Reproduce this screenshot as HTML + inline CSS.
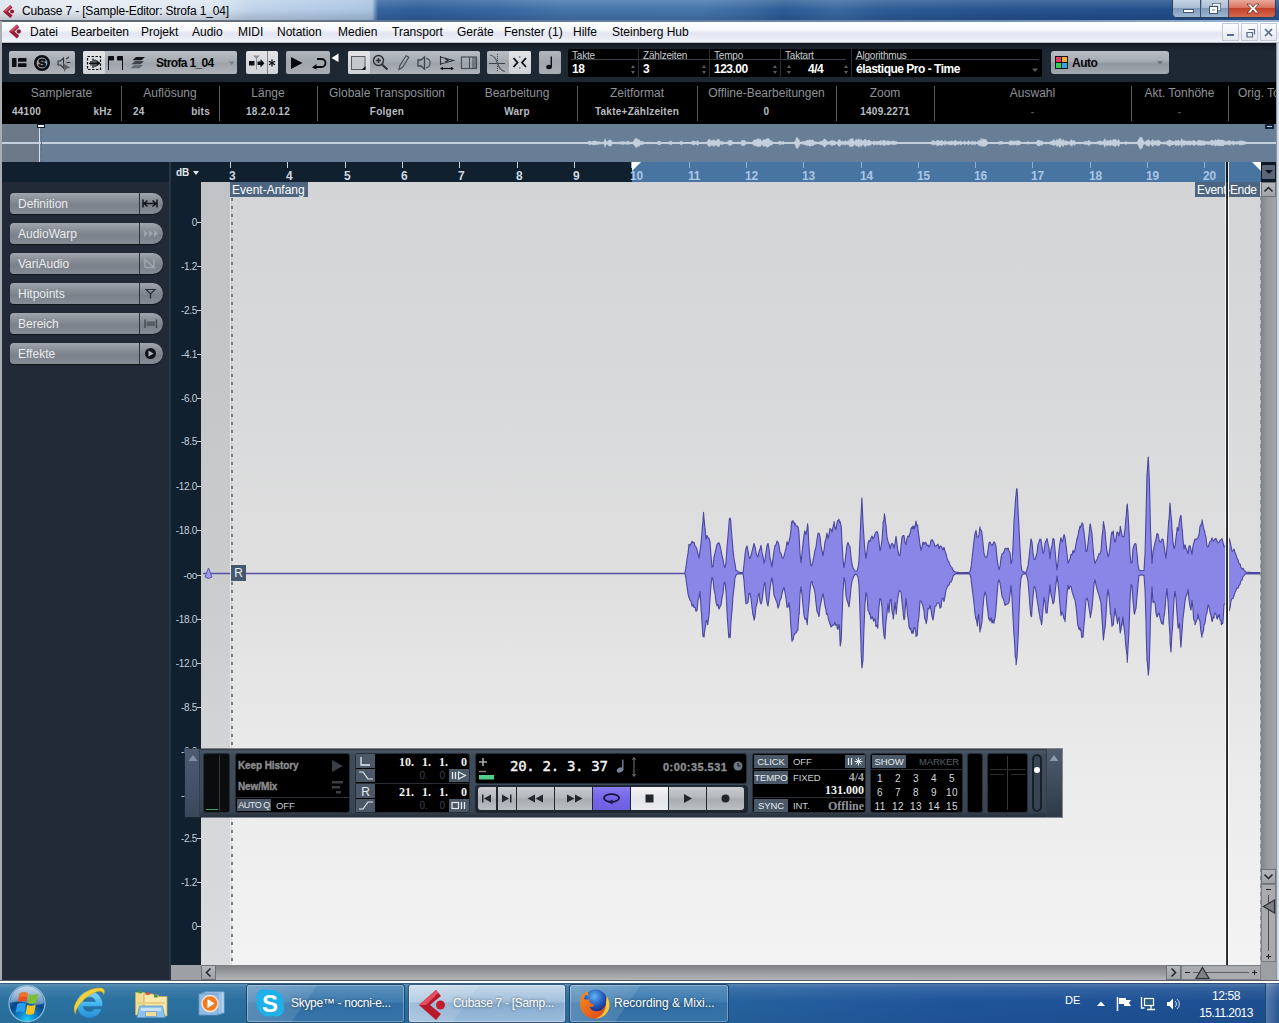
<!DOCTYPE html>
<html lang="de">
<head>
<meta charset="utf-8">
<title>Cubase 7 - [Sample-Editor: Strofa 1_04]</title>
<style>
*{box-sizing:border-box;margin:0;padding:0}
html,body{width:1279px;height:1023px;overflow:hidden;background:#212a36;font-family:"Liberation Sans",sans-serif}
#root{position:relative;width:1279px;height:1023px;overflow:hidden}
#root div,#root svg,#root span.a{position:absolute}
.t{white-space:nowrap;line-height:1}
#bl{left:0;top:21px;width:2px;height:961px;background:#a9adb2}
#br{left:1276px;top:43px;width:3px;height:939px;background:linear-gradient(90deg,#6f7780,#c9d3de 50%,#dfe6ee)}
#bb{left:0;top:980px;width:1279px;height:3px;background:linear-gradient(180deg,#5c5e62 0,#5c5e62 30%,#fbfbfc 36%,#ffffff 100%)}
/* ---------- title ---------- */
#title{left:0;top:0;width:1279px;height:22px;background:linear-gradient(90deg,#dfe6ee 0,#e6ecf3 100px,#dbe5f0 215px,#bfd3ea 250px,#afc8e4 340px,#a9c3e0 372px,#3566a0 378px,#2f5f9a 420px,#3869a3 500px,#4475ab 560px,#4676ac 700px,#3b6aa3 750px,#2d5c96 785px,#3b6aa3 835px,#2e5c96 885px,#26538f 1000px,#23508c 1170px,#2a5892 1279px)}
#title .shade{left:0;top:0;width:1279px;height:21px;background:linear-gradient(180deg,rgba(255,255,255,.16) 0,rgba(255,255,255,0) 45%,rgba(0,0,20,.16) 100%)}
#title .line{left:0;top:20px;width:1279px;height:2px;background:linear-gradient(90deg,#59636f 0,#69737f 300px,#5a7596 420px,#6f8fb5 1000px,#9fb6d2 1279px)}
#title .ttl{left:22px;top:5px;font-size:12px;color:#000;letter-spacing:-0.17px}
#winbtns{left:1172px;top:0;width:104px;height:18px;border:1px solid #2b3f5a;border-top:none;border-radius:0 0 5px 5px;overflow:hidden;background:#8aa6c6}
#winbtns .b1{left:0;top:0;width:28px;height:17px;background:linear-gradient(180deg,#c5d3e3 0,#a9bdd4 45%,#7f9bbb 50%,#9db6d2 100%);border-right:1px solid #3b506b}
#winbtns .b2{left:29px;top:0;width:27px;height:17px;background:linear-gradient(180deg,#c5d3e3 0,#a9bdd4 45%,#7f9bbb 50%,#9db6d2 100%);border-right:1px solid #3b506b}
#winbtns .b3{left:56px;top:0;width:47px;height:17px;background:linear-gradient(180deg,#e9a99c 0,#d9735f 45%,#c6412b 50%,#d4694f 100%)}
/* ---------- menubar ---------- */
#menubar{left:1px;top:22px;width:1278px;height:21px;background:linear-gradient(180deg,#ffffff 0,#f6f7fb 40%,#e3e6f2 55%,#e9ecf5 80%,#f4f5fa 100%);border-bottom:1px solid #b9bdc6}
#menubar .t{top:4px;font-size:12px;color:#000}
.mdi{top:1px;width:17px;height:18px;border:1px solid #c3c9d6;background:linear-gradient(180deg,#fdfdfe,#e6e9f3)}
/* ---------- toolbar ---------- */
#toolbar{left:2px;top:43px;width:1274px;height:39px;background:linear-gradient(180deg,#10161d 0,#1a232d 10%,#1e2833 25%,#1e2833 100%)}
.tg{top:8px;height:23px;border-radius:2px;background:linear-gradient(180deg,#b9bec4 0,#a5abb2 45%,#9da3ab 55%,#b0b5bb 100%)}
.tg .on{top:0;height:23px;background:linear-gradient(180deg,#e3e5e8 0,#d6d9dd 50%,#d0d3d8 100%);border-radius:2px}
.tg .sep{top:0;width:1px;height:23px;background:#7d838b}
.tfield{top:6px;height:28px;background:#000;border-radius:2px}
.tfield .lab{top:2px;font-size:10px;color:#c9cdd2;letter-spacing:-0.2px}
.tfield .val{top:14px;font-size:12px;font-weight:bold;color:#fff;letter-spacing:-0.5px}
.tfield .hl{top:10px;height:1px;background:#3a4047}
.tfield .vl{top:0;width:1px;height:28px;background:#2a3038}
.spin{width:5px;height:11px}
/* ---------- info ---------- */
#info{left:2px;top:82px;width:1274px;height:42px;background:#000}
#info .lab{top:5px;font-size:12px;color:#8d9298;text-align:center}
#info .val{top:25px;font-size:10px;font-weight:bold;color:#b9bdc1;text-align:center;letter-spacing:0.25px}
#info .dv{top:4px;width:1px;height:35px;background:#5d5a57}
/* ---------- overview ---------- */
#overview{left:2px;top:124px;width:1274px;height:38px;background:#687d96;overflow:hidden}
#overview .ovpre{left:0;top:0;width:37px;height:38px;background:#6c7989}
#overview .ovline{left:0;top:18px;width:1274px;height:2px;background:#c3cfdc}
#overview .ovsvg{left:0;top:0}
#overview .ovhandle{left:35px;top:0;width:8px;height:4px;background:#f0f3f6;border:1px solid #0b1a2a}
#overview .ovcursor{left:37px;top:4px;width:1px;height:34px;background:#d8dfe7}
#overview .ovcursor2{left:39px;top:6px;width:1px;height:32px;background:repeating-linear-gradient(180deg,#5d6f85 0,#5d6f85 3px,transparent 3px,transparent 6px)}
#overview .ovcorner{left:1263px;top:0;width:9px;height:5px;background:#13233a;border:1px solid #13233a}
#overview .ovcorner:after{content:"";position:absolute;left:1px;top:1px;width:5px;height:1px;background:#c3cfdc}
/* ---------- left panel ---------- */
#leftpanel{left:2px;top:162px;width:169px;height:818px;background:#212a36}
#leftpanel .hd{left:0;top:0;width:167px;height:20px;background:#10202f}
#leftpanel .edge{left:167px;top:0;width:2px;height:818px;background:#2a3644}
.lb{left:8px;width:153px;height:21px;border-radius:4px 11px 11px 4px;background:linear-gradient(180deg,#a1a6ad 0,#8b9199 30%,#7b818a 60%,#868c95 100%);box-shadow:0 1px 1px rgba(0,0,0,.5)}
.lb .t{left:8px;top:5px;font-size:12px;color:#e9ebed}
.lb .dv{left:129px;top:0;width:1px;height:21px;background:#2c333c}
.lb svg{left:130px;top:0}
/* ---------- ruler ---------- */
#ruler{left:171px;top:162px;width:1090px;height:20px;background:#10202f;overflow:hidden}
#ruler .rsel{left:461px;top:0;width:629px;height:20px;background:#4874a2}
#ruler .rt{top:0;width:1px;height:6px;background:#c9d3de}
#ruler .rt.s{background:#8fb0d2}
#ruler .rn{top:7px;font-size:13px;font-weight:bold;color:#cdd7e2;letter-spacing:-0.3px;transform:scaleX(.92);transform-origin:0 0}
#ruler .rn.s{color:#a9c6e6}
#ruler .rtriL{left:461px;top:0;width:0;height:0;border-top:9px solid #fff;border-right:9px solid transparent}
#ruler .rtriR{left:1081px;top:0;width:0;height:0;border-top:9px solid #fff;border-left:9px solid transparent}
#ruler .rcur{left:1055px;top:0;width:2px;height:20px;background:#101820}
#ruler .rcur2{left:1057px;top:0;width:1px;height:20px;background:#e8eef4}
#ruler .rcur0{left:1054px;top:0;width:1px;height:20px;background:rgba(232,238,244,.7)}
#rdrop{left:1261px;top:162px;width:15px;height:20px;background:#0c1826}
#rdrop .rdropin{left:1px;top:3px;width:13px;height:14px;background:#5a6675;border-radius:1px}
#rdrop .rdroparrow{left:4px;top:8px;width:0;height:0;border-top:4px solid #0a1320;border-left:4px solid transparent;border-right:4px solid transparent}
/* ---------- db scale ---------- */
#dbscale{left:171px;top:162px;width:30px;height:818px;background:#10202f}
#dbscale .dbhead{left:5px;top:6px;font-size:10px;font-weight:bold;color:#e4e8ec}
#dbscale .dbarrow{left:22px;top:9px;width:0;height:0;border-top:4px solid #e4e8ec;border-left:3px solid transparent;border-right:3px solid transparent}
#dbscale .dbl{right:4px;font-size:10px;color:#c3ced9;letter-spacing:-0.3px;margin-top:21px}
#dbscale .dbt{left:26px;width:4px;height:1px;background:#c3ced9;margin-top:20px}
/* ---------- wave ---------- */
#wave{left:201px;top:182px;width:1060px;height:783px;background:linear-gradient(180deg,#d3d4d6 0,#d8d9da 25%,#dfdfe0 50%,#ebebeb 75%,#f3f3f3 100%);overflow:hidden}
#wave .pre{left:0;top:0;width:31px;height:783px;background:rgba(100,104,112,.17)}
#wave .wsvg{left:0;top:0}
#wave .evline{left:28.5px;top:14px;width:1.5px;height:769px;background:rgba(240,244,248,.75)}
#wave .evline2{left:30px;top:14px;width:2.4px;height:769px;background:repeating-linear-gradient(180deg,transparent 0,transparent 2px,#777c84 2px,#777c84 5.5px,transparent 5.5px,transparent 8px)}
#wave .evlabel{top:0;height:15px;background:#4d6580;color:#fff;font-size:12px;padding:2px 0 0 2px}
#wave .rbox{left:30px;top:383px;width:15px;height:16px;background:#46596c;color:#e8ecf0;font-size:12px;text-align:center;padding-top:2px}
#wave .cur{left:1025px;top:0;width:2px;height:783px;background:linear-gradient(90deg,#3a3d42,#1d2024)}
#wave .cur2{left:1027px;top:0;width:1px;height:783px;background:#fff}
#wave .cur0{left:1024px;top:0;width:1px;height:783px;background:rgba(255,255,255,.75)}
#wave .endline{left:1059px;top:14px;width:1px;height:769px;background:repeating-linear-gradient(180deg,#8d9096 0,#8d9096 4px,#c0c3c8 4px,#c0c3c8 8px)}
/* ---------- scrollbars ---------- */
#vscroll{left:1261px;top:182px;width:15px;height:783px;background:linear-gradient(90deg,#7f8388 0,#96999e 40%,#a1a4a8 100%)}
#hscroll{left:201px;top:965px;width:1060px;height:15px;background:linear-gradient(180deg,#7e8084 0,#96989b 45%,#b2b4b7 100%)}
.sbtn{background:linear-gradient(180deg,#b3b6ba,#9fa2a6);border:1px solid #6e7278}
#corner{left:1261px;top:962px;width:15px;height:18px;background:#9c9fa3}
#dbbot{left:171px;top:965px;width:30px;height:15px;background:#9da0a5}
/* ---------- transport ---------- */
#transport{left:185px;top:749px;width:877px;height:68px;background:linear-gradient(180deg,#2c3744 0,#4a5766 3%,#3f4b59 9%,#3f4b59 50%,#394452 92%,#262f3a 100%);box-shadow:0 0 0 1px rgba(30,38,48,.5)}
#transport .hL{left:0;top:0;width:15px;height:68px;background:linear-gradient(180deg,#4c5b6f 0,#44536a 50%,#394759 100%);border-right:1px solid #323e4c}
#transport .hR{left:861px;top:0;width:16px;height:68px;background:linear-gradient(180deg,#4e5c6e 0,#3f4c5c 50%,#2d3946 100%);border-left:1px solid #323e4c}
.bx{background:#000;border-radius:2px;top:5px;height:58px;box-shadow:0 0 0 1px #252e39}
.tb{background:#4a5868;color:#e6eaee;font-size:9.5px;text-align:center;letter-spacing:-0.1px}
.tl{font-size:9.5px;color:#c9ced4;letter-spacing:-0.1px}
.tn{font-family:"Liberation Serif",serif;font-weight:bold;font-size:12px;color:#f2f2f2}
.tbtn{top:2px;height:23px;background:linear-gradient(180deg,#c9ccd0 0,#b4b8bd 45%,#a9adb3 55%,#bcc0c4 100%)}
.mk{font-size:10px;color:#d5d9dd;width:16px;text-align:center;letter-spacing:0.4px;margin-top:1px}
/* ---------- taskbar ---------- */
#taskbar{left:0;top:983px;width:1279px;height:40px;background:linear-gradient(180deg,rgba(20,40,60,.55) 0,rgba(255,255,255,.22) 4%,rgba(255,255,255,.10) 12%,rgba(255,255,255,0) 45%,rgba(0,0,0,.04) 100%),linear-gradient(90deg,#2a719f 0,#2a6e9f 45%,#245f9d 60%,#1f549a 75%,#1d4f90 100%)}
.tkb{top:1px;height:39px;border:1px solid #1d4668;border-radius:3px;background:linear-gradient(125deg,rgba(255,255,255,.22) 0,rgba(255,255,255,.10) 38%,rgba(255,255,255,0) 39%),linear-gradient(180deg,#5a90bd 0,#3f7db0 45%,#326fa4 50%,#3573a8 100%);box-shadow:inset 0 0 0 1px rgba(255,255,255,.30)}
.tkb.act{background:linear-gradient(125deg,rgba(255,255,255,.25) 0,rgba(255,255,255,.10) 38%,rgba(255,255,255,0) 39%),linear-gradient(180deg,#c4d8ea 0,#a2c0dc 45%,#86acd0 50%,#9cbcdb 100%);border-color:#335a80}
.tkb .t{left:44px;top:12px;font-size:12px;color:#fff;text-shadow:0 0 3px rgba(0,0,0,.6);letter-spacing:-0.3px}
#tray .t{color:#fff;font-size:12px}

</style>
</head>
<body>
<div id="root">
<div id="title"><div class="shade"></div><div class="line"></div>
<svg style="left:2px;top:4px" width="14" height="15" viewBox="0 0 16 16"><path d="M9.5,0.5 L1,8 L9.5,15.5 L12,12.5 L7,8 L12,3.5Z" fill="#9a1c34"/><path d="M9.5,0.5 L1,8 L5,8 L11,2.3Z" fill="#d0506a"/><circle cx="11.5" cy="8" r="2.3" fill="#8e1830"/></svg>
<div class="t ttl">Cubase 7 - [Sample-Editor: Strofa 1_04]</div>
<div id="winbtns"><div class="b1"></div><div class="b2"></div><div class="b3"></div>
<svg style="left:0;top:0" width="104" height="18" viewBox="0 0 104 18"><rect x="10.500" y="9.500" width="10" height="3" fill="#fff" stroke="#45556a" stroke-width="1"/><rect x="39.500" y="3.500" width="8" height="7" fill="none" stroke="#45556a" stroke-width="1"/><rect x="40.500" y="4.500" width="6" height="5" fill="none" stroke="#fff" stroke-width="1.500"/><rect x="36.500" y="6.500" width="8" height="7" fill="#a9bdd4" stroke="#45556a" stroke-width="1"/><rect x="38" y="8" width="5" height="4" fill="none" stroke="#fff" stroke-width="1.800"/><path d="M74,4 L77.500,4 L80,7 L82.500,4 L86,4 L82,8.500 L86,13 L82.500,13 L80,10 L77.500,13 L74,13 L78,8.500Z" fill="#fff" stroke="#6b2a20" stroke-width="0.800"/></svg>
</div>
</div>

<div id="menubar">
<svg style="left:7px;top:2px" width="15" height="15" viewBox="0 0 16 16"><path d="M9.5,0.5 L1,8 L9.5,15.5 L12,12.5 L7,8 L12,3.5Z" fill="#9a1c34"/><path d="M9.5,0.5 L1,8 L5,8 L11,2.3Z" fill="#d0506a"/><circle cx="11.5" cy="8" r="2.3" fill="#8e1830"/></svg>
<div class="t" style="left:29px">Datei</div>
<div class="t" style="left:70px">Bearbeiten</div>
<div class="t" style="left:140px">Projekt</div>
<div class="t" style="left:191px">Audio</div>
<div class="t" style="left:237px">MIDI</div>
<div class="t" style="left:276px">Notation</div>
<div class="t" style="left:337px">Medien</div>
<div class="t" style="left:391px">Transport</div>
<div class="t" style="left:456px">Geräte</div>
<div class="t" style="left:503px">Fenster (1)</div>
<div class="t" style="left:572px">Hilfe</div>
<div class="t" style="left:611px">Steinberg Hub</div>
<div class="mdi" style="left:1221px"></div><div class="mdi" style="left:1240px"></div><div class="mdi" style="left:1259px"></div>
<svg style="left:1221px;top:1px" width="56" height="18" viewBox="0 0 56 18"><rect x="5" y="11" width="7" height="2" fill="#566a90"/><path d="M26.500,6.500 h6 v5 M25,9.500 h5.500 v4.500 h-5.500z" fill="none" stroke="#566a90" stroke-width="1.200"/><path d="M43,6 L50,13 M50,6 L43,13" stroke="#566a90" stroke-width="1.700"/></svg>
</div>

<div id="toolbar">
<div class="tg" style="left:7px;width:66px"></div>
<svg style="left:7px;top:8px" width="66" height="23" viewBox="9 51 66 23"><rect x="12" y="58" width="4.500" height="9" rx="0.500" fill="#0c0f13"/><rect x="18" y="58" width="8.500" height="3.800" rx="0.500" fill="#0c0f13"/><rect x="18" y="63.200" width="8.500" height="3.800" rx="0.500" fill="#0c0f13"/><circle cx="42" cy="63" r="6.700" fill="none" stroke="#0c0f13" stroke-width="2.600"/><text x="42" y="67.300" font-family="Liberation Sans,sans-serif" font-size="11.500" font-weight="bold" text-anchor="middle" fill="#0c0f13" stroke="#0c0f13" stroke-width="0.900">S</text><path d="M58,61 h2.500 l3,-3 v10 l-3,-3 h-2.500z" fill="none" stroke="#30353c" stroke-width="1.100"/><path d="M66,59 l3,-2 M66.500,62.500 h4" stroke="#30353c" stroke-width="1.100"/><path d="M63,63 l7.500,5 l-4,0.500 l-2,3.500z" fill="#5a6068"/></svg>
<div class="tg" style="left:81px;width:154px"><div class="on" style="left:0;width:22px"></div></div>
<svg style="left:81px;top:8px" width="154" height="23" viewBox="83 51 154 23"><rect x="87.500" y="56.500" width="13" height="13" fill="none" stroke="#0c0f13" stroke-width="1.200" stroke-dasharray="2.500 1.500"/><path d="M89,63.300 h8 M91,61 v4.600 M93,58.500 v9.500 M95,59.500 v7.600" fill="none" stroke="#0c0f13" stroke-width="1.300"/><path d="M96.300,59.800 L100.500,63.300 L96.300,66.800Z" fill="#0c0f13"/><path d="M108.500,70 v-13.500 h5 v3.500 h-5 M122.500,70 v-13.500 h-5 v3.500 h5" fill="#0c0f13" stroke="#0c0f13" stroke-width="1"/><path d="M132.500,60.300 l3.500,-3.300 h9 l-3.500,3.300z" fill="#14181d"/><path d="M131.500,64.300 l3.500,-3.300 h9 l-3.500,3.300z" fill="#3f454d"/><path d="M130.500,68.300 l3.500,-3.300 h9 l-3.500,3.300z" fill="#666c74"/><path d="M228.500,61.500 h6 l-3,3.500z" fill="#7b8189"/></svg>
<div class="t" style="left:154px;top:14px;font-size:12px;font-weight:bold;color:#050608;letter-spacing:-0.65px">Strofa 1_04</div>
<div class="tg" style="left:244px;width:32px;background:linear-gradient(180deg,#e3e5e8 0,#d6d9dd 50%,#d0d3d8 100%)"><div class="sep" style="left:21px"></div></div>
<svg style="left:244px;top:8px" width="32" height="23" viewBox="246 51 32 23"><path d="M253,55.500 h7 l-3,3 v11 h-1 v-11z" fill="#8a9098"/><rect x="249" y="61" width="5.500" height="4.500" fill="#0c0f13"/><path d="M257.500,61.500 h3 v-2.500 l4,4.200 l-4,4.300 v-2.500 h-3z" fill="#0c0f13"/><path d="M272,59.500 v7 M269,61.200 l6,3.600 M275,61.200 l-6,3.600" stroke="#0c0f13" stroke-width="1.300"/></svg>
<div class="tg" style="left:284px;width:44px;background:linear-gradient(180deg,#b2b7be 0,#a0a6ad 50%,#a9aeb5 100%)"></div>
<svg style="left:284px;top:8px" width="56" height="23" viewBox="286 51 56 23"><path d="M291,57 l11.500,6 l-11.500,6z" fill="#07090c"/><path d="M317,59 h4.500 a4,4 0 0 1 0,8 h-6" fill="none" stroke="#07090c" stroke-width="1.800"/><path d="M312,67.500 l4.500,-3.500 v5.500z" fill="#07090c"/><path d="M331.500,58 l7,-4.500 v8.500z" fill="#fff"/></svg>
<div class="tg" style="left:346px;width:132px"><div class="on" style="left:0;width:22px"></div></div>
<svg style="left:346px;top:8px" width="132" height="23" viewBox="348 51 132 23"><rect x="351.500" y="56.500" width="13.500" height="13" fill="#c5c8cc" stroke="#575c64" stroke-width="1"/><path d="M365.500,66 v4 h-4z" fill="#0c0f13"/><circle cx="378.500" cy="60.500" r="5" fill="none" stroke="#2a2f36" stroke-width="1.400"/><path d="M376,60.500 h5 M378.500,58 v5" stroke="#2a2f36" stroke-width="1.600"/><path d="M382,64.500 l5.500,5" stroke="#2a2f36" stroke-width="2"/><path d="M399,69.500 l0.800,-3.800 l6.200,-10 l2.800,1.600 l-6.200,10z" fill="none" stroke="#4a5058" stroke-width="1.200"/><path d="M418,60 h3 l3.500,-3 v12 l-3.500,-3 h-3z" fill="none" stroke="#3f454d" stroke-width="1.300"/><path d="M426,58.300 a4.800,4.800 0 0 1 0,9.500" fill="none" stroke="#4f555d" stroke-width="1.200"/><path d="M440.500,56 v9 M440.500,57 l13,3.500 l-13,3.500 M445,58.800 l3,1.700 l-3,1.700" fill="none" stroke="#2a2f36" stroke-width="1.100"/><path d="M441.500,68.500 h11" stroke="#0c0f13" stroke-width="1.200"/><path d="M440,68.500 l3,-1.800 v3.600z M454,68.500 l-3,-1.800 v3.600z" fill="#0c0f13"/><rect x="461.500" y="57" width="15" height="11.500" fill="none" stroke="#4a5058" stroke-width="1.200"/><path d="M469.500,57 v11.500 M473,57 v11.500 M475,57 v11.500" stroke="#4a5058" stroke-width="1.100"/></svg>
<div class="tg" style="left:485px;width:44px"><div class="on" style="left:22px;width:22px"></div></div>
<svg style="left:485px;top:8px" width="44" height="23" viewBox="487 51 44 23"><path d="M489,63.500 h16" stroke="#3f454d" stroke-width="1"/><path d="M497.500,54 v17" stroke="#3f454d" stroke-width="1" stroke-dasharray="1 1"/><path d="M490,55 c5,1 6,4 7.500,8.500 c1.500,4.500 3,7 7.500,8" fill="none" stroke="#565c64" stroke-width="1.200"/><path d="M513.500,58 l4,4.500 l-4,4.500 M526,58 l-4,4.500 l4,4.500" fill="none" stroke="#0c0f13" stroke-width="1.800"/><path d="M519.800,56 v2 M519.800,67 v2" stroke="#6b7179" stroke-width="1"/></svg>
<div class="tg" style="left:537px;width:22px;background:linear-gradient(180deg,#b2b7be 0,#a0a6ad 50%,#a9aeb5 100%)"></div>
<svg style="left:537px;top:8px" width="22" height="23" viewBox="539 51 22 23"><ellipse cx="549" cy="67" rx="2.800" ry="2.200" fill="#0c0f13"/><path d="M551.300,67 v-10.500" stroke="#0c0f13" stroke-width="1.400"/></svg>
<div class="tfield" style="left:566px;width:474px">
<div class="hl" style="left:3px;width:275px"></div><div class="hl" style="left:287px;width:184px"></div>
<div class="vl" style="left:70px"></div><div class="vl" style="left:141px"></div><div class="vl" style="left:212px"></div><div class="vl" style="left:283px"></div>
<div class="t lab" style="left:4px">Takte</div><div class="t val" style="left:4px">18</div>
<div class="t lab" style="left:75px">Zählzeiten</div><div class="t val" style="left:75px">3</div>
<div class="t lab" style="left:146px">Tempo</div><div class="t val" style="left:146px">123.00</div>
<div class="t lab" style="left:217px">Taktart</div><div class="t val" style="left:240px">4/4</div>
<div class="t lab" style="left:288px">Algorithmus</div><div class="t val" style="left:288px">élastique Pro - Time</div>
<svg style="left:0;top:0" width="474" height="28" viewBox="0 0 474 28"><g fill="#5a6068"><path d="M63,19 h4 l-2,-3z M63,22 h4 l-2,3z"/><path d="M134,19 h4 l-2,-3z M134,22 h4 l-2,3z"/><path d="M205,19 h4 l-2,-3z M205,22 h4 l-2,3z"/><path d="M219,19 h4 l-2,-3z M219,22 h4 l-2,3z"/><path d="M276,19 h4 l-2,-3z M276,22 h4 l-2,3z"/><path d="M464,19.500 h6 l-3,3.500z"/></g></svg>
</div>
<div class="tg" style="left:1049px;width:118px;border-radius:3px;background:linear-gradient(180deg,#b9bec4 0,#a5abb2 45%,#9097a0 55%,#a4aab1 100%)"></div>
<svg style="left:1053px;top:13px" width="13" height="13" viewBox="0 0 13 13"><rect x="0" y="0" width="13" height="13" fill="#10161a"/><rect x="1" y="1" width="5" height="5" fill="#e63a58"/><rect x="7" y="1" width="5" height="5" fill="#efae30"/><rect x="1" y="7" width="5" height="5" fill="#32cf60"/><rect x="7" y="7" width="5" height="5" fill="#38a6de"/></svg>
<div class="t" style="left:1070px;top:14px;font-size:12px;font-weight:bold;color:#050608;letter-spacing:-0.5px">Auto</div>
<svg style="left:1154px;top:17px" width="8" height="6" viewBox="0 0 8 6"><path d="M1,1 h6 l-3,3.500z" fill="#6f757d"/></svg>
</div>

<div id="info">
<div class="dv" style="left:119px"></div><div class="dv" style="left:217px"></div><div class="dv" style="left:315px"></div><div class="dv" style="left:455px"></div><div class="dv" style="left:575px"></div><div class="dv" style="left:695px"></div><div class="dv" style="left:834px"></div><div class="dv" style="left:932px"></div><div class="dv" style="left:1129px"></div><div class="dv" style="left:1226px"></div>
<div class="t lab" style="left:0;width:119px">Samplerate</div><div class="t val" style="left:10px;text-align:left">44100</div><div class="t val" style="left:60px;width:50px;text-align:right">kHz</div>
<div class="t lab" style="left:119px;width:98px">Auflösung</div><div class="t val" style="left:131px;text-align:left">24</div><div class="t val" style="left:158px;width:50px;text-align:right">bits</div>
<div class="t lab" style="left:217px;width:98px">Länge</div><div class="t val" style="left:217px;width:98px">18.2.0.12</div>
<div class="t lab" style="left:315px;width:140px">Globale Transposition</div><div class="t val" style="left:315px;width:140px">Folgen</div>
<div class="t lab" style="left:455px;width:120px">Bearbeitung</div><div class="t val" style="left:455px;width:120px">Warp</div>
<div class="t lab" style="left:575px;width:120px">Zeitformat</div><div class="t val" style="left:575px;width:120px">Takte+Zählzeiten</div>
<div class="t lab" style="left:695px;width:139px">Offline-Bearbeitungen</div><div class="t val" style="left:695px;width:139px">0</div>
<div class="t lab" style="left:834px;width:98px">Zoom</div><div class="t val" style="left:834px;width:98px">1409.2271</div>
<div class="t lab" style="left:932px;width:197px">Auswahl</div><div class="t val" style="left:932px;width:197px;color:#55595e">-</div>
<div class="t lab" style="left:1129px;width:97px">Akt. Tonhöhe</div><div class="t val" style="left:1129px;width:97px;color:#55595e">-</div>
<div class="t lab" style="left:1236px;width:60px;text-align:left">Orig. To</div>
</div>

<div id="overview"><div class="ovpre"></div><div class="ovline"></div><svg class="ovsvg" width="1275" height="38" viewBox="0 0 1275 38"><path d="M585,19.0 L586,17.8 L587,17.0 L588,17.0 L589,17.8 L590,17.4 L591,17.0 L592,17.0 L593,16.7 L594,17.0 L595,18.1 L596,17.0 L597,18.1 L598,17.5 L599,18.2 L600,18.0 L601,18.2 L602,17.5 L603,14.4 L604,16.5 L605,18.0 L606,17.0 L607,16.0 L608,16.0 L609,15.6 L610,17.8 L611,18.2 L612,17.9 L613,18.2 L614,18.0 L615,18.0 L616,17.9 L617,18.2 L618,17.3 L619,18.1 L620,17.8 L621,17.0 L622,18.1 L623,17.4 L624,18.1 L625,17.4 L626,17.0 L627,17.5 L628,17.9 L629,18.0 L630,17.9 L631,18.0 L632,16.5 L633,14.4 L634,14.7 L635,14.3 L636,16.0 L637,15.3 L638,17.1 L639,17.2 L640,17.2 L641,17.0 L642,18.2 L643,18.2 L644,18.0 L645,18.2 L646,18.2 L647,18.2 L648,18.2 L649,18.2 L650,18.2 L651,18.8 L652,18.8 L653,18.9 L654,19.0 L655,18.0 L656,17.4 L657,17.0 L658,17.0 L659,18.0 L660,19.0 L661,19.0 L662,19.0 L663,19.0 L664,19.0 L665,19.0 L666,18.0 L667,17.8 L668,17.4 L669,16.7 L670,18.1 L671,18.2 L672,19.0 L673,19.0 L674,19.0 L675,19.0 L676,19.0 L677,19.0 L678,18.0 L679,16.7 L680,17.5 L681,18.2 L682,19.0 L683,19.0 L684,19.0 L685,19.0 L686,19.0 L687,19.0 L688,19.0 L689,17.9 L690,17.4 L691,17.0 L692,17.0 L693,17.0 L694,18.1 L695,16.7 L696,16.7 L697,18.2 L698,19.0 L699,18.8 L700,18.2 L701,18.2 L702,18.2 L703,18.2 L704,18.2 L705,18.1 L706,16.0 L707,15.2 L708,15.3 L709,17.2 L710,15.8 L711,17.2 L712,15.0 L713,16.6 L714,17.2 L715,15.8 L716,15.0 L717,15.0 L718,17.2 L719,17.6 L720,17.0 L721,17.5 L722,18.2 L723,18.0 L724,17.9 L725,18.0 L726,17.4 L727,16.0 L728,16.6 L729,16.0 L730,17.2 L731,18.1 L732,18.2 L733,18.2 L734,18.2 L735,18.2 L736,18.0 L737,18.0 L738,18.2 L739,17.8 L740,16.0 L741,16.6 L742,16.0 L743,16.6 L744,17.8 L745,17.9 L746,18.2 L747,18.2 L748,18.2 L749,18.2 L750,18.2 L751,17.0 L752,16.0 L753,15.8 L754,15.5 L755,15.2 L756,14.4 L757,15.2 L758,15.0 L759,15.8 L760,17.6 L761,15.8 L762,15.5 L763,16.0 L764,15.0 L765,14.4 L766,14.4 L767,14.4 L768,16.6 L769,16.6 L770,17.0 L771,18.2 L772,19.0 L773,19.0 L774,19.0 L775,19.0 L776,18.0 L777,17.4 L778,17.0 L779,17.4 L780,18.1 L781,17.0 L782,18.0 L783,19.0 L784,19.0 L785,19.0 L786,19.0 L787,19.0 L788,19.0 L789,19.0 L790,19.0 L791,19.0 L792,17.8 L793,17.6 L794,14.5 L795,13.0 L796,14.5 L797,15.6 L798,17.8 L799,18.2 L800,17.6 L801,17.3 L802,17.6 L803,17.0 L804,17.1 L805,15.9 L806,16.6 L807,16.0 L808,15.6 L809,16.6 L810,15.6 L811,16.0 L812,17.6 L813,17.0 L814,18.2 L815,17.7 L816,18.2 L817,17.8 L818,17.7 L819,16.9 L820,17.0 L821,16.6 L822,15.0 L823,15.0 L824,15.8 L825,17.2 L826,17.4 L827,17.6 L828,17.0 L829,16.8 L830,16.0 L831,16.8 L832,17.0 L833,16.8 L834,18.1 L835,18.0 L836,16.5 L837,15.8 L838,15.6 L839,17.4 L840,17.0 L841,16.8 L842,17.8 L843,16.4 L844,17.0 L845,17.4 L846,16.6 L847,17.0 L848,14.8 L849,15.0 L850,14.4 L851,14.4 L852,17.2 L853,17.2 L854,15.0 L855,15.8 L856,15.8 L857,14.4 L858,16.6 L859,15.0 L860,16.6 L861,17.2 L862,15.8 L863,15.0 L864,15.6 L865,17.2 L866,16.0 L867,16.0 L868,16.6 L869,17.2 L870,17.6 L871,17.8 L872,16.5 L873,17.6 L874,17.4 L875,16.9 L876,17.6 L877,17.1 L878,17.0 L879,16.0 L880,17.8 L881,16.1 L882,16.6 L883,16.2 L884,17.4 L885,16.5 L886,17.1 L887,16.8 L888,17.4 L889,17.0 L890,17.4 L891,16.7 L892,17.0 L893,17.4 L894,17.0 L895,18.0 L896,19.0 L897,19.0 L898,19.0 L899,19.0 L900,19.0 L901,19.0 L902,19.0 L903,19.0 L904,19.0 L905,19.0 L906,19.0 L907,19.0 L908,19.0 L909,19.0 L910,19.0 L911,19.0 L912,19.0 L913,19.0 L914,19.0 L915,19.0 L916,19.0 L917,19.0 L918,19.0 L919,19.0 L920,19.0 L921,19.0 L922,19.0 L923,19.0 L924,19.0 L925,19.0 L926,19.0 L927,19.0 L928,19.0 L929,17.5 L930,17.6 L931,16.0 L932,17.2 L933,17.2 L934,17.6 L935,16.0 L936,16.3 L937,16.7 L938,17.0 L939,16.8 L940,16.1 L941,17.4 L942,17.6 L943,16.3 L944,17.3 L945,17.9 L946,17.5 L947,17.3 L948,17.4 L949,16.7 L950,16.9 L951,17.2 L952,17.6 L953,16.0 L954,16.6 L955,17.6 L956,17.2 L957,17.6 L958,17.6 L959,16.7 L960,18.0 L961,18.2 L962,17.3 L963,17.0 L964,18.1 L965,18.1 L966,17.0 L967,16.7 L968,18.1 L969,17.8 L970,17.0 L971,17.4 L972,17.8 L973,16.7 L974,18.2 L975,18.0 L976,17.0 L977,16.0 L978,17.2 L979,14.0 L980,16.5 L981,14.2 L982,15.7 L983,15.0 L984,15.5 L985,17.0 L986,18.2 L987,19.0 L988,19.0 L989,19.0 L990,19.0 L991,19.0 L992,19.0 L993,19.0 L994,19.0 L995,19.0 L996,18.2 L997,17.8 L998,17.5 L999,17.6 L1000,17.0 L1001,18.2 L1002,18.2 L1003,18.2 L1004,18.2 L1005,18.2 L1006,18.2 L1007,17.5 L1008,16.7 L1009,16.8 L1010,16.5 L1011,17.8 L1012,16.6 L1013,17.3 L1014,16.9 L1015,16.5 L1016,16.7 L1017,16.8 L1018,17.0 L1019,18.2 L1020,19.0 L1021,18.8 L1022,18.2 L1023,18.2 L1024,18.2 L1025,18.1 L1026,17.2 L1027,18.1 L1028,18.2 L1029,18.2 L1030,18.2 L1031,18.0 L1032,18.2 L1033,17.9 L1034,18.2 L1035,17.0 L1036,16.0 L1037,16.0 L1038,16.6 L1039,17.2 L1040,16.6 L1041,18.1 L1042,18.2 L1043,18.0 L1044,17.9 L1045,18.0 L1046,18.0 L1047,18.2 L1048,17.7 L1049,17.1 L1050,17.2 L1051,16.3 L1052,15.3 L1053,17.2 L1054,16.6 L1055,15.0 L1056,17.2 L1057,14.4 L1058,14.4 L1059,15.0 L1060,17.2 L1061,15.0 L1062,16.6 L1063,17.2 L1064,16.6 L1065,17.0 L1066,17.5 L1067,17.9 L1068,17.0 L1069,16.0 L1070,15.6 L1071,17.6 L1072,16.0 L1073,17.0 L1074,18.2 L1075,18.2 L1076,17.9 L1077,18.0 L1078,17.9 L1079,18.2 L1080,18.0 L1081,17.9 L1082,18.0 L1083,17.0 L1084,17.6 L1085,17.2 L1086,17.2 L1087,16.0 L1088,17.4 L1089,17.9 L1090,18.0 L1091,18.2 L1092,18.0 L1093,18.2 L1094,18.0 L1095,17.8 L1096,17.6 L1097,16.8 L1098,17.0 L1099,16.8 L1100,17.4 L1101,17.8 L1102,15.7 L1103,14.4 L1104,17.5 L1105,15.9 L1106,16.7 L1107,16.7 L1108,16.3 L1109,15.6 L1110,17.5 L1111,15.0 L1112,16.0 L1113,15.0 L1114,15.2 L1115,17.4 L1116,15.8 L1117,15.6 L1118,18.1 L1119,18.0 L1120,18.2 L1121,18.2 L1122,18.0 L1123,18.2 L1124,17.0 L1125,18.2 L1126,18.0 L1127,18.2 L1128,17.9 L1129,18.0 L1130,18.2 L1131,18.2 L1132,18.2 L1133,18.2 L1134,18.2 L1135,18.2 L1136,16.1 L1137,15.0 L1138,12.7 L1139,13.4 L1140,13.5 L1141,15.8 L1142,17.6 L1143,18.1 L1144,16.7 L1145,16.3 L1146,16.0 L1147,15.6 L1148,17.2 L1149,17.6 L1150,16.0 L1151,15.6 L1152,17.6 L1153,16.0 L1154,17.6 L1155,16.0 L1156,16.6 L1157,16.0 L1158,17.2 L1159,17.9 L1160,18.0 L1161,18.2 L1162,17.6 L1163,18.2 L1164,17.4 L1165,17.2 L1166,16.7 L1167,16.0 L1168,15.8 L1169,16.6 L1170,17.0 L1171,17.0 L1172,17.4 L1173,17.0 L1174,16.0 L1175,17.2 L1176,15.7 L1177,16.3 L1178,17.8 L1179,16.0 L1180,14.4 L1181,17.0 L1182,16.3 L1183,16.7 L1184,17.0 L1185,17.0 L1186,16.7 L1187,17.0 L1188,16.7 L1189,16.8 L1190,17.6 L1191,16.0 L1192,16.2 L1193,17.2 L1194,17.3 L1195,17.7 L1196,16.3 L1197,16.0 L1198,16.5 L1199,16.2 L1200,16.7 L1201,16.8 L1202,16.9 L1203,16.7 L1204,17.7 L1205,17.6 L1206,17.1 L1207,17.5 L1208,17.4 L1209,16.1 L1210,16.0 L1211,16.6 L1212,17.2 L1213,15.6 L1214,16.0 L1215,16.6 L1216,15.6 L1217,15.6 L1218,16.0 L1219,16.0 L1220,16.0 L1221,16.0 L1222,16.6 L1223,17.2 L1224,16.7 L1225,17.7 L1226,16.8 L1227,16.4 L1228,16.5 L1229,17.6 L1230,17.6 L1231,16.8 L1232,17.3 L1233,17.8 L1234,17.4 L1235,17.0 L1236,17.8 L1237,17.0 L1238,16.7 L1239,17.0 L1240,16.7 L1241,17.0 L1242,17.8 L1243,17.0 L1244,18.0 L1245,19.0 L1245,19.0 L1244,20.0 L1243,20.6 L1242,20.2 L1241,21.0 L1240,20.8 L1239,21.0 L1238,21.3 L1237,20.6 L1236,20.2 L1235,20.6 L1234,20.3 L1233,20.2 L1232,20.7 L1231,21.2 L1230,20.1 L1229,20.2 L1228,21.5 L1227,21.1 L1226,20.7 L1225,20.3 L1224,20.9 L1223,20.4 L1222,21.4 L1221,22.0 L1220,22.0 L1219,21.4 L1218,22.0 L1217,21.8 L1216,21.8 L1215,21.4 L1214,21.4 L1213,22.4 L1212,20.4 L1211,21.4 L1210,21.4 L1209,21.3 L1208,20.3 L1207,20.5 L1206,20.9 L1205,20.1 L1204,20.3 L1203,21.3 L1202,21.1 L1201,21.2 L1200,21.3 L1199,21.8 L1198,21.0 L1197,21.4 L1196,21.7 L1195,20.3 L1194,20.7 L1193,20.8 L1192,21.8 L1191,21.4 L1190,20.2 L1189,21.2 L1188,21.3 L1187,21.0 L1186,21.3 L1185,21.0 L1184,20.6 L1183,21.3 L1182,21.7 L1181,20.6 L1180,23.6 L1179,21.4 L1178,20.2 L1177,21.7 L1176,21.7 L1175,20.8 L1174,22.0 L1173,21.0 L1172,20.3 L1171,21.0 L1170,21.0 L1169,21.4 L1168,22.2 L1167,22.0 L1166,21.3 L1165,20.8 L1164,20.6 L1163,19.8 L1162,20.4 L1161,19.8 L1160,20.0 L1159,19.8 L1158,20.8 L1157,22.0 L1156,21.4 L1155,22.0 L1154,20.4 L1153,21.4 L1152,20.4 L1151,22.4 L1150,22.0 L1149,20.4 L1148,20.4 L1147,22.4 L1146,22.0 L1145,21.7 L1144,21.3 L1143,19.9 L1142,20.4 L1141,21.6 L1140,24.5 L1139,24.6 L1138,25.3 L1137,23.0 L1136,21.3 L1135,19.6 L1134,19.8 L1133,19.8 L1132,19.8 L1131,19.6 L1130,19.6 L1129,20.0 L1128,19.9 L1127,19.8 L1126,20.0 L1125,19.8 L1124,21.0 L1123,19.8 L1122,20.0 L1121,19.8 L1120,19.8 L1119,20.0 L1118,19.7 L1117,22.4 L1116,22.2 L1115,20.6 L1114,22.0 L1113,23.0 L1112,21.4 L1111,22.2 L1110,20.5 L1109,21.8 L1108,21.7 L1107,21.3 L1106,21.3 L1105,22.1 L1104,20.5 L1103,23.6 L1102,21.7 L1101,20.2 L1100,20.6 L1099,21.2 L1098,20.6 L1097,20.8 L1096,20.1 L1095,20.2 L1094,20.0 L1093,19.8 L1092,19.8 L1091,19.8 L1090,20.0 L1089,20.1 L1088,20.6 L1087,22.0 L1086,20.8 L1085,20.8 L1084,20.1 L1083,21.0 L1082,20.0 L1081,19.9 L1080,19.8 L1079,19.8 L1078,20.1 L1077,19.8 L1076,20.1 L1075,19.6 L1074,19.8 L1073,21.0 L1072,21.4 L1071,20.1 L1070,22.4 L1069,21.4 L1068,21.0 L1067,20.1 L1066,20.5 L1065,21.0 L1064,21.4 L1063,20.8 L1062,20.9 L1061,23.0 L1060,20.8 L1059,22.2 L1058,23.6 L1057,22.7 L1056,20.8 L1055,23.0 L1054,20.9 L1053,20.8 L1052,21.9 L1051,21.1 L1050,20.8 L1049,20.9 L1048,20.3 L1047,19.6 L1046,20.0 L1045,20.0 L1044,20.1 L1043,20.0 L1042,19.8 L1041,19.9 L1040,21.4 L1039,20.8 L1038,21.4 L1037,22.0 L1036,22.0 L1035,21.0 L1034,19.8 L1033,20.1 L1032,19.8 L1031,19.8 L1030,19.8 L1029,19.6 L1028,19.8 L1027,19.9 L1026,20.4 L1025,19.7 L1024,19.8 L1023,19.6 L1022,19.8 L1021,19.2 L1020,19.0 L1019,19.8 L1018,21.0 L1017,20.7 L1016,20.9 L1015,21.5 L1014,20.7 L1013,20.4 L1012,21.4 L1011,20.2 L1010,21.5 L1009,20.8 L1008,21.3 L1007,20.5 L1006,19.8 L1005,19.6 L1004,19.6 L1003,19.8 L1002,19.6 L1001,19.8 L1000,20.6 L999,20.1 L998,20.5 L997,20.2 L996,19.6 L995,19.0 L994,19.0 L993,19.0 L992,19.0 L991,19.0 L990,19.0 L989,19.0 L988,19.0 L987,19.0 L986,19.8 L985,21.0 L984,21.8 L983,22.2 L982,22.3 L981,22.8 L980,21.5 L979,23.0 L978,20.8 L977,22.0 L976,20.6 L975,19.8 L974,19.6 L973,21.3 L972,20.2 L971,20.3 L970,21.0 L969,20.2 L968,19.7 L967,20.8 L966,21.0 L965,19.7 L964,19.7 L963,21.0 L962,20.3 L961,19.8 L960,20.0 L959,21.3 L958,20.4 L957,20.1 L956,20.8 L955,20.4 L954,20.9 L953,22.0 L952,20.4 L951,20.8 L950,20.7 L949,21.3 L948,20.6 L947,20.7 L946,20.5 L945,20.1 L944,20.3 L943,21.7 L942,20.1 L941,20.6 L940,21.9 L939,21.2 L938,21.0 L937,21.3 L936,21.7 L935,22.0 L934,20.4 L933,20.8 L932,20.4 L931,21.4 L930,20.1 L929,20.5 L928,19.0 L927,19.0 L926,19.0 L925,19.0 L924,19.0 L923,19.0 L922,19.0 L921,19.0 L920,19.0 L919,19.0 L918,19.0 L917,19.0 L916,19.0 L915,19.0 L914,19.0 L913,19.0 L912,19.0 L911,19.0 L910,19.0 L909,19.0 L908,19.0 L907,19.0 L906,19.0 L905,19.0 L904,19.0 L903,19.0 L902,19.0 L901,19.0 L900,19.0 L899,19.0 L898,19.0 L897,19.0 L896,19.0 L895,20.0 L894,20.6 L893,20.6 L892,21.0 L891,20.8 L890,20.3 L889,20.6 L888,20.3 L887,21.2 L886,20.9 L885,21.0 L884,20.3 L883,21.8 L882,21.4 L881,21.3 L880,20.2 L879,21.4 L878,21.0 L877,20.5 L876,20.4 L875,21.1 L874,20.6 L873,20.4 L872,21.5 L871,20.2 L870,20.1 L869,20.8 L868,21.4 L867,21.4 L866,22.0 L865,20.8 L864,22.4 L863,23.0 L862,21.6 L861,20.4 L860,21.4 L859,23.0 L858,20.9 L857,23.6 L856,22.2 L855,21.6 L854,22.2 L853,20.4 L852,20.8 L851,22.7 L850,22.7 L849,22.2 L848,23.2 L847,20.6 L846,21.4 L845,20.3 L844,20.6 L843,21.6 L842,20.2 L841,21.2 L840,20.6 L839,20.6 L838,22.4 L837,22.2 L836,21.5 L835,20.0 L834,19.7 L833,21.2 L832,21.0 L831,21.2 L830,22.0 L829,21.2 L828,20.6 L827,20.4 L826,20.3 L825,20.8 L824,21.6 L823,23.0 L822,23.0 L821,21.4 L820,21.0 L819,21.1 L818,20.3 L817,20.2 L816,19.6 L815,20.3 L814,19.8 L813,21.0 L812,20.4 L811,22.0 L810,21.8 L809,21.4 L808,22.4 L807,22.0 L806,20.9 L805,22.1 L804,20.9 L803,21.0 L802,20.4 L801,20.7 L800,20.1 L799,19.8 L798,20.2 L797,22.4 L796,23.5 L795,25.0 L794,23.5 L793,20.4 L792,20.0 L791,19.0 L790,19.0 L789,19.0 L788,19.0 L787,19.0 L786,19.0 L785,19.0 L784,19.0 L783,19.0 L782,19.8 L781,21.0 L780,19.7 L779,20.6 L778,21.0 L777,20.3 L776,20.0 L775,19.0 L774,19.0 L773,19.0 L772,19.0 L771,19.8 L770,21.0 L769,21.4 L768,20.9 L767,22.7 L766,22.7 L765,23.6 L764,22.2 L763,22.0 L762,22.5 L761,22.2 L760,20.1 L759,22.2 L758,22.2 L757,22.8 L756,22.7 L755,22.0 L754,22.5 L753,21.6 L752,21.4 L751,21.0 L750,19.6 L749,19.8 L748,19.6 L747,19.6 L746,19.6 L745,20.1 L744,20.0 L743,20.9 L742,22.0 L741,21.4 L740,22.0 L739,20.2 L738,19.8 L737,20.0 L736,20.0 L735,19.6 L734,19.8 L733,19.6 L732,19.8 L731,19.7 L730,20.4 L729,21.4 L728,21.4 L727,21.4 L726,20.3 L725,19.8 L724,20.1 L723,19.8 L722,19.6 L721,20.5 L720,21.0 L719,20.1 L718,20.8 L717,23.0 L716,22.2 L715,22.2 L714,20.8 L713,21.4 L712,23.0 L711,20.8 L710,22.2 L709,20.8 L708,22.7 L707,22.8 L706,21.4 L705,19.9 L704,19.8 L703,19.8 L702,19.8 L701,19.6 L700,19.6 L699,19.2 L698,19.0 L697,19.8 L696,21.3 L695,21.3 L694,19.9 L693,20.6 L692,21.0 L691,21.0 L690,20.3 L689,20.1 L688,19.0 L687,19.0 L686,19.0 L685,19.0 L684,19.0 L683,19.0 L682,19.0 L681,19.6 L680,20.5 L679,21.3 L678,19.8 L677,19.0 L676,19.0 L675,19.0 L674,19.0 L673,19.0 L672,19.0 L671,19.8 L670,19.7 L669,21.3 L668,20.3 L667,20.2 L666,19.8 L665,19.0 L664,19.0 L663,19.0 L662,19.0 L661,19.0 L660,19.0 L659,20.0 L658,21.0 L657,21.0 L656,20.6 L655,20.0 L654,19.0 L653,19.1 L652,19.2 L651,19.2 L650,19.8 L649,19.8 L648,19.8 L647,19.6 L646,19.8 L645,19.6 L644,19.8 L643,19.6 L642,19.6 L641,21.0 L640,20.4 L639,20.8 L638,20.9 L637,22.7 L636,21.4 L635,23.7 L634,23.3 L633,22.7 L632,21.0 L631,20.0 L630,19.9 L629,20.0 L628,20.1 L627,20.5 L626,20.6 L625,20.6 L624,19.9 L623,20.6 L622,19.7 L621,21.0 L620,20.2 L619,19.7 L618,20.4 L617,19.8 L616,20.1 L615,20.0 L614,20.0 L613,19.6 L612,19.9 L611,19.6 L610,20.2 L609,22.4 L608,22.0 L607,22.0 L606,21.0 L605,20.0 L604,21.0 L603,23.6 L602,20.5 L601,19.8 L600,20.0 L599,19.8 L598,20.5 L597,19.7 L596,21.0 L595,19.9 L594,21.0 L593,20.8 L592,21.0 L591,21.0 L590,20.6 L589,20.2 L588,21.0 L587,20.6 L586,20.2 L585,19.0Z" fill="#c3cfdc" stroke="#c3cfdc" stroke-width="0.3"/></svg><div class="ovhandle"></div><div class="ovcursor"></div><div class="ovcursor2"></div><div class="ovcorner"></div></div>
<div id="leftpanel"><div class="hd"></div><div class="edge"></div>
<div class="lb" style="top:31px"><div class="t">Definition</div><div class="dv"></div><svg width="24" height="21" viewBox="0 0 24 21"><path d="M3,6.500 v8 M17,6.500 v8 M4,10.500 h12 M7.500,7.500 l-3.500,3 l3.500,3 M12.500,7.500 l3.500,3 l-3.500,3" fill="none" stroke="#10141a" stroke-width="1.500"/></svg></div>
<div class="lb" style="top:61px"><div class="t">AudioWarp</div><div class="dv"></div><svg width="24" height="21" viewBox="0 0 24 21"><path d="M4,7 l4,3.500 l-4,3.500z M9,7 l4,3.500 l-4,3.500z M14,7 l4,3.500 l-4,3.500z" fill="#a0a6ad" stroke="#9097a0" stroke-width="0.500"/></svg></div>
<div class="lb" style="top:91px"><div class="t">VariAudio</div><div class="dv"></div><svg width="24" height="21" viewBox="0 0 24 21"><path d="M5,14.500 v-8 l9,8 v-9 M5,14.500 h9" fill="none" stroke="#a0a6ad" stroke-width="1.600"/></svg></div>
<div class="lb" style="top:121px"><div class="t">Hitpoints</div><div class="dv"></div><svg width="24" height="21" viewBox="0 0 24 21"><path d="M6,6.500 h9 l-4.500,4.500z" fill="none" stroke="#2a3038" stroke-width="1.200"/><path d="M10.500,10.500 v5" stroke="#2a3038" stroke-width="1.400"/></svg></div>
<div class="lb" style="top:151px"><div class="t">Bereich</div><div class="dv"></div><svg width="24" height="21" viewBox="0 0 24 21"><path d="M5,6.500 v8.500 M16.500,6.500 v8.500" stroke="#3a4048" stroke-width="1.200"/><rect x="6.500" y="8.500" width="8.500" height="4.500" fill="#565c64"/></svg></div>
<div class="lb" style="top:181px"><div class="t">Effekte</div><div class="dv"></div><svg width="24" height="21" viewBox="0 0 24 21"><circle cx="10.500" cy="10.500" r="5.500" fill="#10141a"/><path d="M8.500,7.500 l5,3 l-5,3z" fill="#b0b5bc"/></svg></div>
</div>

<div id="ruler"><div class="rsel"></div><div class="rt" style="left:59.0px"></div><div class="t rn" style="left:58.0px">3</div><div class="rt" style="left:116.0px"></div><div class="t rn" style="left:115.0px">4</div><div class="rt" style="left:174.0px"></div><div class="t rn" style="left:173.0px">5</div><div class="rt" style="left:231.0px"></div><div class="t rn" style="left:230.0px">6</div><div class="rt" style="left:288.0px"></div><div class="t rn" style="left:287.0px">7</div><div class="rt" style="left:346.0px"></div><div class="t rn" style="left:345.0px">8</div><div class="rt" style="left:403.0px"></div><div class="t rn" style="left:402.0px">9</div><div class="rt s" style="left:460.0px"></div><div class="t rn s" style="left:459.0px">10</div><div class="rt s" style="left:518.0px"></div><div class="t rn s" style="left:517.0px">11</div><div class="rt s" style="left:575.0px"></div><div class="t rn s" style="left:574.0px">12</div><div class="rt s" style="left:632.0px"></div><div class="t rn s" style="left:631.0px">13</div><div class="rt s" style="left:690.0px"></div><div class="t rn s" style="left:689.0px">14</div><div class="rt s" style="left:747.0px"></div><div class="t rn s" style="left:746.0px">15</div><div class="rt s" style="left:804.0px"></div><div class="t rn s" style="left:803.0px">16</div><div class="rt s" style="left:861.0px"></div><div class="t rn s" style="left:860.0px">17</div><div class="rt s" style="left:919.0px"></div><div class="t rn s" style="left:918.0px">18</div><div class="rt s" style="left:976.0px"></div><div class="t rn s" style="left:975.0px">19</div><div class="rt s" style="left:1033.0px"></div><div class="t rn s" style="left:1032.0px">20</div><div class="rtriL"></div><div class="rtriR"></div><div class="rcur0"></div><div class="rcur"></div><div class="rcur2"></div></div>
<div id="rdrop"><div class="rdropin"></div><div class="rdroparrow"></div></div>
<div id="dbscale"><div class="t dbhead">dB</div><div class="dbarrow"></div><div class="t dbl" style="top:35px">0</div><div class="dbt" style="top:40px"></div><div class="t dbl" style="top:79px">-1.2</div><div class="dbt" style="top:84px"></div><div class="t dbl" style="top:123px">-2.5</div><div class="dbt" style="top:128px"></div><div class="t dbl" style="top:167px">-4.1</div><div class="dbt" style="top:172px"></div><div class="t dbl" style="top:211px">-6.0</div><div class="dbt" style="top:216px"></div><div class="t dbl" style="top:254px">-8.5</div><div class="dbt" style="top:259px"></div><div class="t dbl" style="top:299px">-12.0</div><div class="dbt" style="top:304px"></div><div class="t dbl" style="top:343px">-18.0</div><div class="dbt" style="top:348px"></div><div class="t dbl" style="top:388px">-oo</div><div class="dbt" style="top:393px"></div><div class="t dbl" style="top:432px">-18.0</div><div class="dbt" style="top:437px"></div><div class="t dbl" style="top:476px">-12.0</div><div class="dbt" style="top:481px"></div><div class="t dbl" style="top:520px">-8.5</div><div class="dbt" style="top:525px"></div><div class="t dbl" style="top:564px">-6.0</div><div class="dbt" style="top:569px"></div><div class="t dbl" style="top:608px">-4.1</div><div class="dbt" style="top:613px"></div><div class="t dbl" style="top:651px">-2.5</div><div class="dbt" style="top:656px"></div><div class="t dbl" style="top:695px">-1.2</div><div class="dbt" style="top:700px"></div><div class="t dbl" style="top:739px">0</div><div class="dbt" style="top:744px"></div></div>
<div id="wave"><div class="pre"></div><div class="post"></div><svg class="wsvg" width="1060" height="783" viewBox="201 182 1060 783"><line x1="203" y1="573.5" x2="1261" y2="573.5" stroke="#5552a6" stroke-width="1.4"/><path d="M685.0,572.7 L686.0,566.8 L687.0,559.5 L688.0,553.6 L689.0,544.3 L690.0,545.3 L691.0,543.5 L692.0,541.3 L693.0,542.8 L694.0,542.2 L695.0,545.9 L696.0,546.9 L697.0,549.7 L698.0,553.9 L699.0,558.2 L700.0,550.8 L701.0,543.5 L702.0,532.2 L702.3,527.4 L703.0,521.3 L703.5,512.2 L704.0,518.6 L704.9,527.4 L705.0,527.9 L706.0,539.3 L707.0,535.5 L708.0,537.8 L709.0,538.3 L710.0,542.1 L711.0,555.6 L712.0,567.1 L713.0,566.6 L714.0,557.1 L715.0,553.3 L716.0,548.6 L717.0,544.4 L718.0,543.3 L719.0,542.8 L720.0,545.7 L721.0,550.0 L722.0,555.7 L723.0,559.6 L724.0,565.6 L725.0,567.7 L726.0,562.2 L727.0,547.3 L728.0,536.2 L729.0,523.8 L729.3,519.2 L730.0,518.0 L730.7,520.4 L731.0,525.2 L732.0,538.2 L733.0,549.9 L734.0,558.9 L735.0,563.9 L736.0,570.7 L737.0,570.7 L738.0,571.6 L739.0,572.3 L740.0,572.4 L741.0,572.5 L742.0,572.6 L743.0,572.7 L744.0,564.8 L745.0,554.7 L746.0,548.4 L747.0,545.9 L748.0,550.7 L749.0,557.2 L750.0,558.4 L751.0,555.8 L752.0,551.3 L753.0,547.6 L754.0,543.5 L755.0,546.9 L756.0,552.2 L757.0,555.6 L758.0,557.0 L759.0,551.8 L760.0,548.9 L761.0,545.3 L762.0,552.4 L763.0,556.3 L764.0,563.2 L765.0,560.0 L766.0,552.0 L767.0,545.7 L768.0,543.5 L769.0,548.5 L770.0,558.0 L771.0,561.9 L772.0,567.0 L773.0,558.6 L774.0,551.0 L775.0,545.6 L776.0,544.8 L777.0,541.1 L778.0,542.2 L779.0,545.7 L780.0,552.6 L781.0,553.3 L782.0,557.0 L783.0,558.4 L784.0,556.1 L785.0,552.4 L786.0,548.5 L787.0,541.7 L788.0,544.8 L789.0,541.4 L790.0,537.3 L791.0,530.2 L791.4,523.9 L792.0,521.2 L793.0,520.6 L793.1,522.7 L794.0,522.1 L795.0,525.1 L795.0,523.4 L796.0,525.5 L797.0,526.7 L797.3,526.2 L798.0,527.1 L798.7,530.9 L799.0,533.8 L800.0,553.2 L801.0,562.8 L802.0,553.4 L803.0,543.6 L804.0,535.4 L804.8,530.9 L805.0,531.5 L806.0,534.6 L807.0,529.6 L807.6,523.9 L808.0,527.4 L809.0,547.0 L810.0,558.3 L811.0,565.5 L812.0,565.7 L813.0,560.9 L814.0,556.2 L815.0,550.1 L816.0,547.1 L817.0,539.5 L818.0,533.4 L819.0,533.2 L820.0,536.6 L821.0,545.9 L822.0,550.7 L823.0,555.8 L824.0,549.9 L825.0,542.0 L826.0,538.7 L827.0,533.2 L828.0,538.5 L829.0,534.7 L830.0,528.3 L830.1,529.8 L831.0,529.4 L832.0,531.2 L832.0,532.1 L833.0,527.0 L833.9,523.9 L834.0,521.6 L835.0,528.2 L835.8,527.4 L836.0,529.7 L837.0,522.6 L837.7,520.4 L838.0,520.7 L839.0,519.3 L839.5,522.7 L840.0,521.4 L841.0,525.7 L841.3,527.4 L842.0,543.0 L843.0,560.2 L844.0,567.6 L845.0,561.6 L846.0,553.4 L847.0,545.0 L848.0,542.5 L849.0,545.2 L850.0,546.7 L851.0,557.1 L852.0,563.6 L853.0,568.1 L854.0,569.5 L855.0,570.9 L856.0,571.3 L857.0,571.0 L858.0,568.0 L859.0,560.6 L860.0,538.2 L861.0,515.7 L861.0,517.1 L861.9,498.1 L862.0,500.4 L862.8,518.0 L863.0,522.8 L864.0,538.4 L865.0,551.6 L866.0,558.4 L867.0,551.0 L868.0,543.2 L869.0,540.4 L870.0,541.5 L871.0,537.9 L872.0,536.0 L873.0,539.0 L874.0,537.3 L875.0,533.8 L876.0,531.9 L877.0,531.5 L877.4,532.1 L878.0,533.9 L879.0,541.8 L880.0,551.0 L881.0,546.7 L882.0,540.3 L883.0,526.3 L883.0,522.7 L884.0,519.8 L884.4,513.8 L885.0,517.4 L885.8,525.1 L886.0,525.3 L887.0,537.3 L888.0,541.4 L889.0,543.7 L890.0,548.8 L891.0,544.9 L892.0,543.3 L893.0,544.2 L894.0,548.2 L895.0,543.9 L896.0,536.3 L897.0,544.1 L898.0,551.5 L899.0,555.0 L900.0,555.7 L901.0,546.4 L902.0,537.1 L903.0,535.6 L904.0,535.6 L905.0,542.6 L906.0,544.5 L907.0,538.5 L908.0,536.0 L909.0,536.6 L910.0,533.5 L910.7,530.9 L911.0,528.6 L912.0,527.1 L912.6,528.6 L913.0,525.9 L914.0,529.3 L914.5,526.2 L915.0,527.2 L916.0,521.0 L916.3,522.7 L917.0,526.0 L917.7,525.1 L918.0,530.2 L919.0,536.4 L920.0,544.7 L921.0,550.3 L922.0,546.9 L923.0,542.0 L924.0,544.5 L925.0,542.4 L926.0,542.6 L927.0,545.6 L928.0,545.0 L929.0,546.9 L930.0,544.9 L931.0,540.6 L932.0,539.5 L933.0,541.1 L934.0,543.3 L935.0,546.7 L936.0,545.8 L937.0,545.2 L938.0,544.1 L939.0,548.7 L940.0,546.3 L941.0,546.1 L942.0,547.5 L943.0,550.1 L944.0,547.4 L945.0,551.1 L946.0,553.7 L947.0,557.9 L948.0,560.9 L949.0,562.1 L950.0,565.2 L951.0,566.5 L952.0,567.7 L953.0,570.2 L954.0,571.2 L955.0,571.8 L956.0,572.2 L957.0,572.3 L958.0,572.4 L959.0,572.5 L960.0,572.6 L961.0,572.7 L962.0,572.7 L963.0,572.6 L964.0,572.6 L965.0,572.6 L966.0,572.5 L967.0,572.5 L968.0,572.5 L969.0,572.2 L970.0,571.7 L971.0,567.7 L972.0,558.7 L973.0,549.5 L974.0,540.7 L975.0,533.6 L975.9,530.9 L976.0,530.4 L977.0,537.3 L978.0,537.2 L979.0,535.0 L980.0,526.8 L980.1,528.6 L981.0,530.4 L981.6,530.9 L982.0,533.7 L983.0,543.2 L984.0,553.5 L985.0,556.6 L986.0,557.7 L987.0,556.7 L988.0,550.4 L989.0,542.9 L990.0,542.0 L991.0,544.2 L992.0,545.6 L993.0,543.9 L994.0,541.7 L995.0,543.2 L996.0,546.6 L997.0,558.1 L998.0,565.0 L999.0,569.6 L1000.0,566.6 L1001.0,558.0 L1002.0,553.8 L1003.0,553.4 L1004.0,551.9 L1005.0,548.7 L1006.0,548.2 L1007.0,549.5 L1008.0,548.0 L1009.0,550.9 L1010.0,552.8 L1011.0,563.7 L1012.0,560.6 L1013.0,546.9 L1014.0,521.2 L1014.3,518.0 L1015.0,508.6 L1015.7,496.9 L1016.0,495.5 L1016.6,488.7 L1017.0,488.8 L1017.5,496.9 L1018.0,509.4 L1018.9,525.1 L1019.0,529.3 L1020.0,548.6 L1021.0,565.0 L1022.0,571.0 L1023.0,571.6 L1024.0,572.1 L1025.0,572.3 L1026.0,572.4 L1027.0,569.5 L1028.0,565.9 L1029.0,557.5 L1030.0,548.5 L1031.0,538.9 L1032.0,542.4 L1033.0,553.1 L1034.0,559.3 L1035.0,559.8 L1036.0,556.5 L1037.0,552.9 L1038.0,544.4 L1039.0,542.1 L1040.0,539.0 L1041.0,540.0 L1042.0,546.7 L1043.0,553.5 L1044.0,551.4 L1045.0,543.0 L1046.0,541.1 L1047.0,538.5 L1048.0,543.6 L1049.0,548.1 L1050.0,558.8 L1051.0,549.5 L1052.0,545.3 L1053.0,538.5 L1054.0,539.5 L1055.0,549.8 L1056.0,561.3 L1057.0,569.9 L1058.0,562.0 L1059.0,550.4 L1060.0,542.7 L1061.0,537.7 L1062.0,541.9 L1063.0,539.8 L1064.0,534.5 L1065.0,537.3 L1066.0,545.1 L1067.0,553.7 L1068.0,563.4 L1069.0,560.9 L1070.0,559.1 L1071.0,554.2 L1072.0,555.0 L1073.0,550.4 L1074.0,552.7 L1075.0,549.6 L1076.0,544.1 L1077.0,538.7 L1078.0,535.8 L1079.0,529.6 L1079.0,530.9 L1080.0,526.2 L1080.4,527.4 L1081.0,526.1 L1081.8,523.9 L1082.0,522.7 L1083.0,524.4 L1083.2,527.4 L1084.0,532.0 L1085.0,540.7 L1086.0,551.7 L1087.0,550.9 L1088.0,543.6 L1089.0,534.8 L1090.0,524.6 L1090.3,523.9 L1091.0,528.2 L1091.7,532.1 L1092.0,534.2 L1093.0,547.0 L1094.0,557.8 L1095.0,563.5 L1096.0,561.0 L1097.0,559.6 L1098.0,556.8 L1099.0,553.7 L1100.0,553.6 L1101.0,550.8 L1102.0,537.1 L1103.0,528.6 L1103.4,521.6 L1104.0,524.6 L1104.8,529.8 L1105.0,531.6 L1106.0,543.3 L1107.0,551.3 L1108.0,556.7 L1109.0,554.0 L1110.0,547.3 L1111.0,537.0 L1111.8,532.1 L1112.0,533.9 L1113.0,532.3 L1113.3,530.9 L1114.0,538.5 L1115.0,542.3 L1116.0,538.6 L1117.0,532.1 L1117.5,532.1 L1118.0,532.7 L1119.0,535.9 L1120.0,530.4 L1120.3,526.2 L1121.0,530.1 L1122.0,535.6 L1123.0,536.9 L1124.0,536.5 L1124.5,532.1 L1125.0,529.6 L1125.9,518.0 L1126.0,518.5 L1127.0,505.5 L1127.3,504.0 L1128.0,513.4 L1128.9,529.8 L1129.0,531.8 L1130.0,554.5 L1131.0,563.1 L1132.0,562.7 L1133.0,548.6 L1134.0,545.3 L1135.0,543.4 L1136.0,544.1 L1137.0,553.8 L1138.0,565.2 L1139.0,570.2 L1140.0,570.4 L1141.0,570.7 L1142.0,570.7 L1143.0,570.5 L1144.0,570.2 L1145.0,554.2 L1146.0,516.7 L1146.2,508.7 L1147.0,473.7 L1147.2,473.5 L1148.0,460.1 L1148.3,457.0 L1149.0,472.9 L1149.5,485.2 L1150.0,507.8 L1150.4,527.4 L1151.0,541.0 L1152.0,563.4 L1153.0,551.6 L1154.0,547.4 L1155.0,542.7 L1156.0,539.0 L1157.0,533.6 L1158.0,534.1 L1159.0,539.7 L1160.0,541.9 L1161.0,541.9 L1162.0,539.0 L1163.0,539.3 L1164.0,545.4 L1165.0,552.6 L1166.0,558.3 L1167.0,546.7 L1168.0,531.7 L1168.7,520.4 L1169.0,520.9 L1170.0,503.1 L1170.1,504.4 L1171.0,515.8 L1171.6,520.4 L1172.0,528.7 L1173.0,541.9 L1174.0,548.7 L1175.0,546.1 L1176.0,537.9 L1177.0,530.3 L1177.2,527.4 L1178.0,530.7 L1178.6,529.8 L1179.0,524.1 L1180.0,518.0 L1180.0,518.2 L1180.9,515.2 L1181.0,515.9 L1182.0,528.3 L1182.3,529.8 L1183.0,540.1 L1184.0,549.1 L1185.0,544.7 L1186.0,548.3 L1187.0,550.7 L1188.0,553.8 L1189.0,546.1 L1190.0,545.7 L1191.0,550.2 L1192.0,554.4 L1193.0,545.9 L1194.0,542.3 L1195.0,539.0 L1196.0,539.6 L1197.0,538.8 L1198.0,537.5 L1199.0,534.8 L1200.0,526.4 L1200.6,525.1 L1201.0,525.7 L1202.0,521.8 L1202.0,519.9 L1203.0,525.0 L1203.5,527.4 L1204.0,529.4 L1204.9,532.1 L1205.0,533.9 L1206.0,537.5 L1207.0,546.2 L1208.0,547.0 L1209.0,544.5 L1210.0,541.3 L1211.0,541.1 L1212.0,537.9 L1213.0,540.2 L1214.0,541.1 L1215.0,538.8 L1216.0,538.5 L1217.0,541.2 L1218.0,542.9 L1219.0,542.1 L1220.0,540.4 L1221.0,539.6 L1222.0,538.7 L1223.0,542.4 L1224.0,547.1 L1225.0,546.6 L1226.0,542.3 L1227.0,542.3 L1228.0,538.8 L1229.0,538.4 L1230.0,541.1 L1231.0,546.2 L1232.0,551.2 L1233.0,551.0 L1234.0,549.0 L1235.0,552.4 L1236.0,554.8 L1237.0,557.9 L1238.0,559.7 L1239.0,563.7 L1240.0,563.8 L1241.0,567.5 L1242.0,568.9 L1243.0,568.2 L1244.0,570.3 L1245.0,571.2 L1246.0,572.1 L1247.0,572.3 L1248.0,572.3 L1249.0,572.4 L1250.0,572.4 L1251.0,572.5 L1252.0,572.5 L1253.0,572.5 L1254.0,572.5 L1255.0,572.5 L1256.0,572.5 L1257.0,572.5 L1258.0,572.5 L1259.0,572.5 L1260.0,572.5 L1261.0,572.5 L1261.0,573.6 L1260.0,573.6 L1259.0,573.6 L1258.0,573.6 L1257.0,573.6 L1256.0,573.6 L1255.0,573.6 L1254.0,573.6 L1253.0,573.6 L1252.0,573.6 L1251.0,573.6 L1250.0,573.6 L1249.0,573.6 L1248.0,573.6 L1247.0,573.6 L1246.0,573.6 L1245.0,574.2 L1244.0,575.7 L1243.0,576.6 L1242.0,580.0 L1241.0,580.6 L1240.0,584.3 L1239.0,585.6 L1238.0,588.3 L1237.0,587.9 L1236.0,590.4 L1235.0,592.3 L1234.0,595.8 L1233.0,598.4 L1232.0,598.6 L1231.0,600.9 L1230.0,607.9 L1229.0,610.9 L1228.0,610.9 L1227.0,615.9 L1226.9,614.2 L1226.0,604.0 L1225.0,603.6 L1224.0,604.5 L1223.0,621.1 L1222.7,623.6 L1222.0,623.2 L1221.3,624.8 L1221.0,620.3 L1220.0,620.1 L1219.4,614.2 L1219.0,616.9 L1218.0,615.7 L1217.5,618.9 L1217.0,618.7 L1216.0,614.5 L1215.0,613.2 L1214.2,614.2 L1214.0,618.0 L1213.0,617.0 L1212.4,621.3 L1212.0,621.4 L1211.0,615.7 L1210.0,612.0 L1209.0,606.7 L1208.0,604.8 L1207.0,613.0 L1206.3,614.2 L1206.0,615.3 L1205.0,622.7 L1204.9,623.6 L1204.0,624.8 L1203.5,630.6 L1203.0,632.3 L1202.0,635.3 L1202.0,637.3 L1201.0,631.8 L1200.6,628.3 L1200.0,621.2 L1199.2,618.9 L1199.0,619.4 L1198.0,614.1 L1197.8,616.6 L1197.0,619.4 L1196.4,621.3 L1196.0,621.9 L1195.0,624.8 L1195.0,622.0 L1194.0,620.1 L1193.6,618.9 L1193.0,608.9 L1192.0,600.0 L1191.0,610.0 L1190.0,606.3 L1189.0,600.2 L1188.0,589.6 L1187.0,594.2 L1186.0,596.3 L1185.0,601.4 L1184.0,610.4 L1183.0,617.6 L1182.3,628.3 L1182.0,632.4 L1181.0,645.7 L1180.9,647.1 L1180.0,632.7 L1179.5,623.6 L1179.0,624.9 L1178.1,628.3 L1178.0,627.3 L1177.0,612.9 L1176.0,598.0 L1175.0,591.4 L1174.0,599.5 L1173.0,618.7 L1172.5,628.3 L1172.0,632.6 L1171.1,649.4 L1171.0,651.9 L1170.1,642.4 L1170.0,635.7 L1169.0,621.1 L1168.7,614.2 L1168.0,601.0 L1167.0,588.5 L1166.0,596.6 L1165.0,608.9 L1164.5,614.2 L1164.0,616.5 L1163.1,624.8 L1163.0,622.1 L1162.0,623.1 L1161.7,623.6 L1161.0,621.4 L1160.3,618.9 L1160.0,617.3 L1159.0,613.0 L1158.9,614.2 L1158.0,613.8 L1157.5,616.6 L1157.0,616.9 L1156.0,613.2 L1155.0,602.5 L1154.0,601.1 L1153.0,602.7 L1152.0,587.1 L1151.0,607.4 L1150.4,618.9 L1150.0,637.3 L1149.5,656.5 L1149.0,668.8 L1148.3,675.2 L1148.0,670.0 L1147.2,661.1 L1147.0,660.8 L1146.2,633.0 L1146.0,621.4 L1145.0,589.5 L1144.0,575.4 L1143.0,575.2 L1142.0,574.9 L1141.0,574.9 L1140.0,575.2 L1139.0,575.4 L1138.0,584.4 L1137.0,596.9 L1136.0,608.3 L1135.0,611.7 L1134.5,614.2 L1134.0,611.8 L1133.0,600.4 L1132.0,585.8 L1131.0,584.7 L1130.0,600.4 L1129.0,628.7 L1128.9,633.0 L1128.0,647.4 L1127.3,662.3 L1127.0,655.1 L1126.0,647.9 L1125.9,647.1 L1125.0,635.3 L1124.5,630.6 L1124.0,627.2 L1123.1,618.9 L1123.0,616.7 L1122.0,625.3 L1121.7,623.6 L1121.0,629.3 L1120.3,633.0 L1120.0,630.4 L1119.0,617.0 L1118.9,618.9 L1118.0,619.7 L1117.5,623.6 L1117.0,620.2 L1116.1,614.2 L1116.0,616.0 L1115.0,608.4 L1114.0,617.3 L1113.3,624.8 L1113.0,624.1 L1112.0,626.4 L1111.8,623.6 L1111.0,614.9 L1110.4,614.2 L1110.0,606.8 L1109.0,596.2 L1108.0,589.3 L1107.0,597.2 L1106.0,615.2 L1105.0,628.3 L1104.8,628.3 L1104.0,634.4 L1103.4,640.0 L1103.0,632.9 L1102.0,619.4 L1102.0,618.9 L1101.0,603.1 L1100.0,599.1 L1099.0,595.3 L1098.0,592.2 L1097.0,589.0 L1096.0,584.8 L1095.0,579.9 L1094.0,583.6 L1093.0,596.9 L1092.0,608.3 L1091.0,614.1 L1090.3,617.7 L1090.0,613.8 L1089.0,608.0 L1088.0,601.2 L1087.0,598.1 L1086.0,599.4 L1085.0,613.0 L1084.6,618.9 L1084.0,624.1 L1083.2,635.3 L1083.0,637.1 L1082.0,636.0 L1081.8,637.7 L1081.0,629.8 L1080.4,630.6 L1080.0,627.8 L1079.0,628.3 L1079.0,629.4 L1078.0,625.6 L1077.6,623.6 L1077.0,616.2 L1076.0,606.8 L1075.0,600.0 L1074.0,597.7 L1073.0,594.6 L1072.0,591.3 L1071.0,586.4 L1070.0,586.2 L1069.0,589.3 L1068.0,585.4 L1067.0,593.9 L1066.0,608.2 L1065.0,621.6 L1064.9,620.1 L1064.0,618.1 L1064.0,618.9 L1063.0,614.7 L1062.0,611.9 L1061.2,614.2 L1061.0,615.7 L1060.0,604.9 L1059.0,593.2 L1058.0,583.1 L1057.0,576.1 L1056.0,584.1 L1055.0,592.7 L1054.0,602.0 L1053.0,603.8 L1052.0,598.3 L1051.0,594.5 L1050.0,584.9 L1049.0,595.5 L1048.0,603.5 L1047.1,613.0 L1047.0,612.8 L1046.0,612.9 L1045.0,602.2 L1044.0,597.6 L1043.0,608.7 L1042.0,621.4 L1041.5,624.8 L1041.0,620.6 L1040.1,618.9 L1040.0,617.1 L1039.0,612.2 L1038.0,605.0 L1037.0,599.5 L1036.0,591.4 L1035.0,586.8 L1034.0,586.7 L1033.0,597.1 L1032.0,608.7 L1031.6,616.6 L1031.0,616.0 L1030.7,614.2 L1030.0,606.9 L1029.0,593.2 L1028.0,581.1 L1027.0,576.7 L1026.0,573.6 L1025.0,573.6 L1024.0,573.8 L1023.0,574.3 L1022.0,575.0 L1021.0,578.5 L1020.0,588.6 L1019.0,614.0 L1018.5,628.3 L1018.0,639.5 L1017.1,656.5 L1017.0,657.0 L1016.1,664.7 L1016.0,659.2 L1015.2,656.5 L1015.0,649.3 L1014.0,634.7 L1013.8,633.0 L1013.0,617.5 L1012.0,597.3 L1011.0,585.4 L1010.0,594.4 L1009.0,602.5 L1008.0,603.7 L1007.0,604.3 L1006.0,604.3 L1005.0,605.4 L1004.0,600.8 L1003.0,598.3 L1002.0,596.3 L1001.0,589.5 L1000.0,582.9 L999.0,579.8 L998.0,582.8 L997.0,595.2 L996.0,609.0 L995.5,614.2 L995.0,618.1 L994.1,621.3 L994.0,623.3 L993.0,620.1 L992.7,622.4 L992.0,622.9 L991.3,617.7 L991.0,618.4 L990.0,621.3 L990.0,620.8 L989.0,618.0 L988.6,618.9 L988.0,612.4 L987.0,605.1 L986.0,594.6 L985.0,592.0 L984.0,596.3 L983.0,606.6 L982.0,621.9 L981.6,623.6 L981.0,627.3 L980.1,630.6 L980.0,631.9 L979.0,618.8 L978.7,614.2 L978.0,617.2 L977.3,626.0 L977.0,622.8 L976.0,618.2 L975.9,618.9 L975.0,614.0 L974.0,603.2 L973.0,595.0 L972.0,587.6 L971.0,578.5 L970.0,574.2 L969.0,573.7 L968.0,573.6 L967.0,573.6 L966.0,573.6 L965.0,573.6 L964.0,573.6 L963.0,573.6 L962.0,573.6 L961.0,573.6 L960.0,573.6 L959.0,573.6 L958.0,573.6 L957.0,573.6 L956.0,573.6 L955.0,574.2 L954.0,575.0 L953.0,576.2 L952.0,579.9 L951.0,582.1 L950.0,582.1 L949.0,585.3 L948.0,585.4 L947.0,587.7 L946.0,590.1 L945.0,596.3 L944.0,601.5 L943.0,598.1 L942.0,598.8 L941.0,607.4 L940.0,608.1 L939.0,602.8 L938.0,603.0 L937.0,603.0 L936.0,606.0 L935.0,606.3 L934.0,613.4 L933.2,618.9 L933.0,620.0 L932.0,616.2 L931.0,609.8 L930.0,605.4 L929.0,608.9 L928.0,608.4 L927.0,619.6 L926.2,623.6 L926.0,622.0 L925.0,618.3 L924.8,618.9 L924.0,610.9 L923.0,606.4 L922.0,603.6 L921.0,601.1 L920.0,600.8 L919.0,615.6 L918.7,618.9 L918.0,623.0 L917.3,634.2 L917.0,635.8 L916.0,636.4 L915.9,633.0 L915.0,627.8 L914.5,628.3 L914.0,627.6 L913.0,633.3 L912.6,630.6 L912.0,633.5 L911.0,630.3 L910.7,628.3 L910.0,629.2 L909.0,626.7 L908.8,623.6 L908.0,617.4 L907.4,614.2 L907.0,607.7 L906.0,598.4 L905.0,611.6 L904.6,618.9 L904.0,619.7 L903.2,614.2 L903.0,610.7 L902.0,601.8 L901.0,592.3 L900.0,590.5 L899.0,591.3 L898.0,596.9 L897.0,604.5 L896.2,614.2 L896.0,610.9 L895.0,602.6 L894.0,612.6 L893.3,618.9 L893.0,615.4 L892.0,611.3 L891.0,599.0 L890.0,600.4 L889.0,612.8 L888.0,603.5 L887.0,613.3 L886.3,618.9 L886.0,621.3 L885.0,637.4 L884.9,638.9 L884.0,635.5 L883.5,630.6 L883.0,625.3 L882.0,607.1 L881.0,599.5 L880.0,598.5 L879.0,606.6 L878.0,622.5 L877.9,628.3 L877.0,625.0 L876.5,626.0 L876.0,626.5 L875.0,618.9 L875.0,620.0 L874.0,619.1 L873.6,621.3 L873.0,618.6 L872.2,616.6 L872.0,618.0 L871.0,618.6 L870.8,618.9 L870.0,613.3 L869.4,614.2 L869.0,611.8 L868.0,610.5 L867.0,596.2 L866.0,592.5 L865.0,603.3 L864.0,627.8 L863.8,633.0 L863.0,660.3 L862.8,661.1 L862.0,668.0 L861.9,667.0 L861.0,649.5 L861.0,644.7 L860.0,614.2 L860.0,613.1 L859.0,584.8 L858.0,576.9 L857.0,575.0 L856.0,574.3 L855.0,574.4 L854.0,575.9 L853.0,578.4 L852.0,581.0 L851.0,588.0 L850.0,598.6 L849.0,606.9 L848.0,603.1 L847.0,600.3 L846.0,595.3 L845.0,581.7 L844.0,577.5 L843.0,591.5 L842.2,614.2 L842.0,618.0 L841.3,637.7 L841.0,641.2 L840.3,645.9 L840.0,641.2 L839.5,626.0 L839.0,624.6 L838.0,629.5 L837.2,628.3 L837.0,624.6 L836.0,625.7 L835.0,622.6 L834.8,622.4 L834.0,625.0 L833.0,625.3 L832.5,624.8 L832.0,626.0 L831.0,627.0 L830.1,623.6 L830.0,624.4 L829.0,620.9 L828.3,618.9 L828.0,616.1 L827.0,613.4 L826.4,614.2 L826.0,609.9 L825.0,606.0 L824.0,599.0 L823.0,593.7 L822.0,597.2 L821.0,602.6 L820.0,607.0 L819.0,616.4 L818.9,616.6 L818.0,613.1 L817.0,611.5 L816.0,602.9 L815.0,593.0 L814.0,588.2 L813.0,586.0 L812.0,581.4 L811.0,582.4 L810.0,590.3 L809.0,603.2 L808.0,614.2 L807.2,624.8 L807.0,622.6 L806.0,618.2 L805.7,618.9 L805.0,619.2 L804.0,615.3 L803.9,614.2 L803.0,605.5 L802.0,594.1 L801.0,586.8 L800.0,594.2 L799.2,614.2 L799.0,613.7 L798.0,626.8 L797.8,630.6 L797.0,630.7 L796.0,633.0 L795.9,633.0 L795.0,633.4 L794.0,635.3 L794.0,634.7 L793.0,639.9 L792.1,640.0 L792.0,641.5 L791.0,627.2 L790.7,623.6 L790.0,611.3 L789.0,602.9 L788.0,607.0 L787.0,607.3 L786.0,598.1 L785.0,592.5 L784.0,587.5 L783.0,589.7 L782.0,593.9 L781.0,598.8 L780.0,600.4 L779.0,605.4 L778.0,608.1 L777.0,602.7 L776.0,600.4 L775.0,597.5 L774.0,595.5 L773.0,584.4 L772.0,577.7 L771.0,582.0 L770.0,588.3 L769.0,598.6 L768.0,606.2 L767.0,602.5 L766.0,595.1 L765.0,582.3 L764.0,584.9 L763.0,592.8 L762.0,600.9 L761.0,604.0 L760.0,601.2 L759.0,593.1 L758.0,596.1 L757.0,603.8 L756.0,606.7 L755.0,616.3 L754.1,620.1 L754.0,619.6 L753.2,614.2 L753.0,615.2 L752.0,607.2 L751.0,598.7 L750.0,593.0 L749.0,593.5 L748.0,602.3 L747.0,603.4 L746.0,603.8 L745.0,593.7 L744.0,580.6 L743.0,573.6 L742.0,573.6 L741.0,573.6 L740.0,573.6 L739.0,573.6 L738.0,573.6 L737.0,574.3 L736.0,575.1 L735.0,578.0 L734.0,587.9 L733.0,596.0 L732.0,611.1 L731.6,614.2 L731.0,621.8 L730.2,637.7 L730.0,634.0 L729.0,635.9 L728.8,637.7 L728.0,626.5 L727.4,618.9 L727.0,610.4 L726.0,591.4 L725.0,582.1 L724.0,583.1 L723.0,593.5 L722.0,598.1 L721.0,605.1 L720.0,606.8 L719.0,609.1 L718.0,604.4 L717.0,605.9 L716.0,602.3 L715.0,593.5 L714.0,589.3 L713.0,579.3 L712.0,577.3 L711.0,585.3 L710.0,598.2 L709.1,614.2 L709.0,614.6 L708.0,622.4 L707.7,624.8 L707.0,621.0 L706.0,620.6 L705.8,623.6 L705.0,628.9 L704.4,633.0 L704.0,637.1 L703.0,634.4 L703.0,636.5 L702.0,622.1 L701.6,614.2 L701.0,607.8 L700.0,591.6 L699.0,597.4 L698.0,600.4 L697.0,610.6 L696.0,611.2 L695.0,607.2 L694.0,607.5 L693.0,604.2 L692.0,606.2 L691.0,601.2 L690.0,600.1 L689.0,597.6 L688.0,593.5 L687.0,586.7 L686.0,578.6 L685.0,573.6Z" fill="#8986e8" stroke="#4a479e" stroke-width="1.1" stroke-linejoin="round"/><path d="M205,577 L208.5,568 L212,577 Q208.5,580 205,577Z" fill="#9b98ee" stroke="#5a57b0" stroke-width="1"/></svg><div class="evline"></div><div class="evline2"></div><div class="t evlabel" style="left:29px;width:78px">Event-Anfang</div><div class="t evlabel" style="left:994px;width:65px;letter-spacing:-0.3px">Event-Ende</div><div class="t rbox">R</div><div class="cur0"></div><div class="cur"></div><div class="cur2"></div><div class="endline"></div></div>
<div id="vscroll">
<div class="sbtn" style="left:0;top:0;width:15px;height:15px"></div>
<svg style="left:0;top:0" width="15" height="15" viewBox="0 0 15 15"><path d="M3.500,9.500 l4,-4 l4,4" fill="none" stroke="#20242a" stroke-width="1.500"/></svg>
<div class="sbtn" style="left:0;top:687px;width:15px;height:15px"></div>
<svg style="left:0;top:687px" width="15" height="15" viewBox="0 0 15 15"><path d="M3.500,5.500 l4,4 l4,-4" fill="none" stroke="#20242a" stroke-width="1.500"/></svg>
<div style="left:0;top:702px;width:15px;height:78px;background:#a9abae;border:1px solid #7a7d82"></div>
<div style="left:7px;top:713px;width:1px;height:56px;background:#4a4e54"></div>
<div style="left:5px;top:707px;width:5px;height:1px;background:#20242a"></div>
<div style="left:5px;top:774px;width:5px;height:1px;background:#20242a"></div><div style="left:7px;top:772px;width:1px;height:5px;background:#20242a"></div>
<svg style="left:0;top:715px" width="15" height="20" viewBox="0 0 15 20"><path d="M2.500,9.500 l11,-6.500 v13z" fill="#7d8186" stroke="#2a2e34" stroke-width="1.200"/></svg>
</div>
<div id="dbbot"></div>
<div id="hscroll">
<div class="sbtn" style="left:0;top:0;width:15px;height:15px"></div>
<svg style="left:0;top:0" width="15" height="15" viewBox="0 0 15 15"><path d="M9.500,3.500 l-4,4 l4,4" fill="none" stroke="#20242a" stroke-width="1.500"/></svg>
<div class="sbtn" style="left:965px;top:0;width:15px;height:15px"></div>
<svg style="left:965px;top:0" width="15" height="15" viewBox="0 0 15 15"><path d="M5.500,3.500 l4,4 l-4,4" fill="none" stroke="#20242a" stroke-width="1.500"/></svg>
<div style="left:980px;top:0;width:80px;height:15px;background:#a9abae;border:1px solid #7a7d82"></div>
<div style="left:992px;top:7px;width:56px;height:1px;background:#5a5e64"></div>
<div style="left:984px;top:7px;width:5px;height:1px;background:#20242a"></div>
<div style="left:1051px;top:7px;width:5px;height:1px;background:#20242a"></div><div style="left:1053px;top:5px;width:1px;height:5px;background:#20242a"></div>
<svg style="left:993px;top:1px" width="18" height="14" viewBox="0 0 18 14"><path d="M8.500,1.500 l6.500,11 h-13z" fill="#7d8186" stroke="#2a2e34" stroke-width="1.200"/></svg>
</div>
<div id="corner"></div>

<div id="transport"><div class="hL"></div><div class="hR"></div>
<svg style="left:3px;top:5px" width="10" height="8" viewBox="0 0 10 8"><path d="M0.500,7 h9 l-4.500,-6z" fill="#8190a4"/></svg>
<svg style="left:864px;top:5px" width="10" height="8" viewBox="0 0 10 8"><path d="M0.500,7 h9 l-4.500,-6z" fill="#8c9aae"/></svg>
<div class="bx" style="left:19px;width:25px;background:#0a0c0e"><div style="left:15px;top:1px;width:1px;height:56px;background:#34383c"></div><div style="left:2px;top:55px;width:12px;height:1px;background:#4f9a62"></div></div>
<div class="bx" style="left:51px;width:113px">
<div class="t" style="left:2px;top:7px;font-size:10px;font-weight:bold;color:#8c8e91;letter-spacing:-0.1px;-webkit-text-stroke:0.35px #8c8e91">Keep History</div>
<div class="t" style="left:2px;top:28px;font-size:10px;font-weight:bold;color:#8c8e91;letter-spacing:-0.1px;-webkit-text-stroke:0.35px #8c8e91">New/Mix</div>
<svg style="left:94px;top:4px" width="18" height="40" viewBox="0 0 18 40"><path d="M2,2 l11,6 l-11,6z" fill="#3a3f45"/><rect x="2" y="23" width="11" height="2.500" fill="#3a3f45"/><rect x="2" y="28" width="8" height="2.500" fill="#3a3f45"/><rect x="6" y="33" width="5" height="2.500" fill="#3a3f45"/></svg>
<div style="left:0;top:43px;width:113px;height:1px;background:#2a2f35"></div>
<div class="t tb" style="left:1px;top:45px;width:34px;height:12px;padding-top:2px;font-size:9px;letter-spacing:-0.5px">AUTO Q</div>
<div class="t tl" style="left:40px;top:47px">OFF</div>
</div>
<div class="bx" style="left:171px;width:113px">
<div class="tb" style="left:0;top:0;width:19px;height:14px"></div><div class="tb" style="left:0;top:15px;width:19px;height:13px"></div>
<div class="tb" style="left:0;top:30px;width:19px;height:14px"></div><div class="tb" style="left:0;top:45px;width:19px;height:13px"></div>
<div style="left:0;top:29px;width:113px;height:1px;background:#2a2f35"></div>
<svg style="left:0;top:0" width="20" height="58" viewBox="0 0 20 58"><path d="M5,3 v8 h9" fill="none" stroke="#e6eaee" stroke-width="1.300"/><path d="M3,18 h4 l5,7 h5" fill="none" stroke="#e6eaee" stroke-width="1.200"/><text x="9.500" y="42" font-family="Liberation Sans,sans-serif" font-size="12" fill="#e6eaee" text-anchor="middle">R</text><path d="M3,55 h4 l5,-7 h5" fill="none" stroke="#e6eaee" stroke-width="1.200"/></svg>
<div class="t tn" style="right:55px;top:2px">10.</div><div class="t tn" style="right:38px;top:2px">1.</div><div class="t tn" style="right:21px;top:2px">1.</div><div class="t tn" style="right:2px;top:2px">0</div>
<div class="t tn" style="right:55px;top:32px">21.</div><div class="t tn" style="right:38px;top:32px">1.</div><div class="t tn" style="right:21px;top:32px">1.</div><div class="t tn" style="right:2px;top:32px">0</div>
<div class="t" style="right:24px;top:17px;font-size:10px;color:#3d4249;word-spacing:3px">0.&nbsp; 0</div>
<div class="t" style="right:24px;top:47px;font-size:10px;color:#3d4249;word-spacing:3px">0.&nbsp; 0</div>
<div class="tb" style="left:93px;top:15px;width:20px;height:13px"></div><div class="tb" style="left:93px;top:45px;width:20px;height:13px"></div>
<svg style="left:93px;top:15px" width="20" height="43" viewBox="0 0 20 43"><path d="M3.500,3 v7 M6.500,3 v7" stroke="#e6eaee" stroke-width="1.300"/><path d="M9.500,3 l7,3.500 l-7,3.500z" fill="none" stroke="#e6eaee" stroke-width="1.100"/><rect x="3" y="33.500" width="6.500" height="6" fill="none" stroke="#e6eaee" stroke-width="1.200"/><path d="M12.500,33 v7 M15.500,33 v7" stroke="#e6eaee" stroke-width="1.300"/></svg>
</div>
<div class="bx" style="left:291px;width:270px;height:29px">
<div class="t" style="left:34px;top:5px;font-family:'DejaVu Sans Mono','Liberation Mono',monospace;font-size:14px;color:#f4f4f4;letter-spacing:-0.3px;-webkit-text-stroke:0.4px #f4f4f4">20. 2. 3. 37</div>
<div class="t" style="left:187px;top:8px;font-family:'Liberation Sans',sans-serif;font-weight:bold;font-size:11px;color:#8f9194;letter-spacing:0.45px;-webkit-text-stroke:0.3px #8f9194">0:00:35.531</div>
<svg style="left:0;top:0" width="271" height="29" viewBox="0 0 271 29"><path d="M3,8 h8 M7,4 v8" stroke="#a9a9a9" stroke-width="1.600"/><path d="M3,17.500 h7" stroke="#8a8a8a" stroke-width="1.400"/><rect x="3" y="21" width="15" height="4.500" fill="#4fd08a"/><ellipse cx="144" cy="16" rx="3.300" ry="2.500" fill="#73849a" transform="rotate(-20 144 16)"/><path d="M146.800,16 v-10.500" stroke="#73849a" stroke-width="1.400"/><path d="M158,4 v18 M156.500,6 l1.500,-2.500 l1.500,2.500 M156.500,20 l1.500,2.500 l1.500,-2.500" stroke="#7f756b" stroke-width="1" fill="none"/><circle cx="262" cy="12" r="4.500" fill="#6f7782"/><path d="M262,9 v3 h2.500" stroke="#0a0c0e" stroke-width="1" fill="none"/></svg>
</div>
<div style="left:290px;top:36px;width:273px;height:28px;background:#1e2630;border-radius:4px">
<div class="tbtn" style="left:3px;width:18px;border-radius:3px 0 0 3px"></div><div class="tbtn" style="left:23px;width:18px"></div><div class="tbtn" style="left:42px;width:37px"></div><div class="tbtn" style="left:80px;width:37px"></div>
<div class="tbtn" style="left:118px;width:37px;background:linear-gradient(180deg,#8a7cf0 0,#7466e6 50%,#6e60e0 100%)"></div>
<div class="tbtn" style="left:156px;width:37px;background:linear-gradient(180deg,#f6f6f8 0,#e4e5ea 50%,#ecedf0 100%)"></div>
<div class="tbtn" style="left:194px;width:37px"></div><div class="tbtn" style="left:232px;width:37px;border-radius:0 3px 3px 0"></div>
<svg style="left:0;top:0" width="273" height="28" viewBox="0 0 273 28"><g fill="#22272e" stroke="none"><rect x="7" y="9.500" width="1.500" height="8"/><path d="M16,9.500 l-7,4 l7,4z"/><path d="M27,9.500 l7,4 l-7,4z"/><rect x="35" y="9.500" width="1.500" height="8"/><path d="M60,9.500 l-7.500,4 l7.500,4z M68,9.500 l-7.500,4 l7.500,4z"/><path d="M92,9.500 l7.500,4 l-7.500,4z M100,9.500 l7.500,4 l-7.500,4z"/><rect x="170.500" y="9.500" width="8" height="8"/><path d="M209,9 l8,4.500 l-8,4.500z"/><circle cx="250.500" cy="13.500" r="4"/></g><ellipse cx="136.500" cy="13" rx="7.500" ry="3.800" fill="none" stroke="#1a1840" stroke-width="1.800"/><path d="M133,17 l4.500,-2.500 v5z" fill="#1a1840"/></svg>
</div>
<div class="bx" style="left:568px;width:112px">
<div class="t tb" style="left:1px;top:1px;width:34px;height:13px;padding-top:2px">CLICK</div><div class="t tl" style="left:40px;top:3px">OFF</div>
<div class="tb" style="left:92px;top:1px;width:20px;height:13px"></div>
<svg style="left:92px;top:1px" width="20" height="13" viewBox="0 0 20 13"><path d="M3.500,3 v7 M6.500,3 v7" stroke="#e6eaee" stroke-width="1.200"/><path d="M13.500,2.500 v8 M9.500,6.500 h8 M10.700,3.700 l5.600,5.600 M16.300,3.700 l-5.600,5.600" stroke="#e6eaee" stroke-width="1"/></svg>
<div style="left:0;top:15px;width:112px;height:1px;background:#2a2f35"></div>
<div class="t tb" style="left:1px;top:17px;width:34px;height:13px;padding-top:2px">TEMPO</div><div class="t tl" style="left:40px;top:19px">FIXED</div>
<div class="t tn" style="right:1px;top:17px;font-size:12px;color:#a4a7ab">4/4</div>
<div class="t tn" style="right:1px;top:30px">131.000</div>
<div style="left:0;top:43px;width:112px;height:1px;background:#2a2f35"></div>
<div class="t tb" style="left:1px;top:45px;width:34px;height:13px;padding-top:2px">SYNC</div><div class="t tl" style="left:40px;top:47px">INT.</div>
<div class="t tn" style="right:1px;top:46px;color:#8e949b">Offline</div>
</div>
<div class="bx" style="left:686px;width:91px">
<div class="t tb" style="left:1px;top:1px;width:34px;height:13px;padding-top:2px">SHOW</div><div class="t tl" style="left:48px;top:3px;color:#5a6068">MARKER</div>
<div style="left:0;top:15px;width:91px;height:1px;background:#2a2f35"></div>
<div class="t mk" style="left:1px;top:19px">1</div><div class="t mk" style="left:19px;top:19px">2</div><div class="t mk" style="left:37px;top:19px">3</div><div class="t mk" style="left:55px;top:19px">4</div><div class="t mk" style="left:73px;top:19px">5</div>
<div class="t mk" style="left:1px;top:33px">6</div><div class="t mk" style="left:19px;top:33px">7</div><div class="t mk" style="left:37px;top:33px">8</div><div class="t mk" style="left:55px;top:33px">9</div><div class="t mk" style="left:73px;top:33px">10</div>
<div class="t mk" style="left:1px;top:47px">11</div><div class="t mk" style="left:19px;top:47px">12</div><div class="t mk" style="left:37px;top:47px">13</div><div class="t mk" style="left:55px;top:47px">14</div><div class="t mk" style="left:73px;top:47px">15</div>
</div>
<div class="bx" style="left:783px;width:14px"></div>
<div class="bx" style="left:803px;width:39px"><div style="left:19px;top:2px;width:1px;height:54px;background:#38352f"></div><div style="left:2px;top:15px;width:35px;height:1px;background:#2e3032"></div><div style="left:2px;top:20px;width:14px;height:1px;background:#2e3032"></div><div style="left:23px;top:20px;width:14px;height:1px;background:#2e3032"></div></div>
<div style="left:847px;top:5px;width:10px;height:58px;border-radius:5px;background:#384452;border:2px solid #18202a"><div style="left:0px;top:11px;width:6px;height:6px;border-radius:3px;background:#fff"></div></div>
</div>

<div id="taskbar">
<svg style="left:7px;top:1px" width="40" height="40" viewBox="0 0 40 40"><defs><radialGradient id="orb" cx="50%" cy="95%" r="75%"><stop offset="0" stop-color="#18d0f8"/><stop offset="0.35" stop-color="#0f7fc8"/><stop offset="0.7" stop-color="#0a4688"/><stop offset="1" stop-color="#2a6aa4"/></radialGradient><linearGradient id="orbg" x1="0" y1="0" x2="0" y2="1"><stop offset="0" stop-color="#e8f0f8" stop-opacity="0.85"/><stop offset="1" stop-color="#9cc0dc" stop-opacity="0.55"/></linearGradient></defs><circle cx="20" cy="19.600" r="18" fill="url(#orb)" stroke="#8fbcdc" stroke-width="1.200"/><path d="M3.200,19 a16.800,16.800 0 0 1 33.600,0 q-5,3.500 -16.800,0 q-9,-2.800 -16.800,0z" fill="url(#orbg)"/><path d="M12.500,9.500 q4,-2.200 8.500,-0.300 l-1.700,8.800 q-4,-2 -8.600,0.300z" fill="#e8501e"/><path d="M12.500,9.500 q4,-2.200 8.500,-0.300 l-0.800,4 q-4,-1.800 -8.500,0.500z" fill="#f08030" opacity="0.7"/><path d="M22.500,10 q4,2 8.500,-0.500 l-1.700,9 q-4,2.500 -8.500,0.400z" fill="#7cc030"/><path d="M10.300,20 q4.200,-2.300 8.600,-0.300 l-1.700,8.800 q-4,-2 -8.600,0.300z" fill="#2a9cf0"/><path d="M20.300,20.800 q4,2 8.500,-0.400 l-1.700,9 q-4,2.500 -8.500,0.400z" fill="#f8c020"/></svg>
<svg style="left:70px;top:2px" width="38" height="36" viewBox="0 0 38 36"><defs><linearGradient id="ieg" x1="0" y1="0" x2="0" y2="1"><stop offset="0" stop-color="#8bdcf8"/><stop offset="0.55" stop-color="#3bb0ea"/><stop offset="1" stop-color="#2a8fd6"/></linearGradient></defs><path d="M19.500,6 a13,13.500 0 1 0 12.300,18 h-7.300 a6.500,6.500 0 0 1 -11.500,-2.500 h19.500 a13,13.500 0 0 0 -13,-15.500z M13,16.500 a6.500,6 0 0 1 12.500,0z" fill="url(#ieg)" stroke="#2579b8" stroke-width="0.700"/><path d="M5.500,29 c-6,-9 9,-27 25,-26 c4,0.300 5,3 3,6.500 c0,-2.500 -2,-4 -6,-3 c-11,3 -22,15 -22,22.500z" fill="#f4d23c" stroke="#c9a520" stroke-width="0.500"/></svg>
<svg style="left:133px;top:5px" width="36" height="32" viewBox="0 0 36 32"><path d="M2.500,4.500 h9 l2,2.500 h12 v20 h-23z" fill="#f3dd96" stroke="#c9a94e" stroke-width="0.800"/><path d="M11,6 h9 l2,2.500 h12 v19.500 h-23z" fill="#f8e8ac" stroke="#c9a94e" stroke-width="0.800"/><rect x="5.500" y="2.800" width="3.500" height="2.500" fill="#3f9a4c"/><rect x="13" y="4.300" width="3.500" height="2.500" fill="#d24a40"/><rect x="21" y="7" width="3.500" height="2.500" fill="#3f9a4c"/><path d="M4,14 h28 v2 h-28z" fill="#e6cf84"/><path d="M6.500,18 h23 l2.500,11.500 h-28z" fill="#8ec2ea" stroke="#5c98cc" stroke-width="0.800"/><path d="M8,20 h20 l0.500,3 h-21z" fill="#c6e0f4"/><rect x="12.500" y="23.500" width="11" height="5" fill="#f3dd96" stroke="#6aa0d0" stroke-width="0.800"/></svg>
<svg style="left:197px;top:7px" width="30" height="28" viewBox="0 0 30 28"><rect x="8" y="2" width="19" height="21" fill="#b9d6f0" stroke="#8ab2da" stroke-width="0.800"/><rect x="5" y="3" width="19" height="21" fill="#a9cbec" stroke="#7ea8d4" stroke-width="0.800"/><rect x="2" y="4" width="19" height="21" fill="#8fbbe4" stroke="#6a98c8" stroke-width="0.800"/><circle cx="13" cy="13.500" r="8" fill="#f07c22" stroke="#fbe6d0" stroke-width="1.400"/><path d="M10.500,9 l7,4.500 l-7,4.500z" fill="#fff"/></svg>
<div class="tkb" style="left:246px;width:159px"><svg style="left:6px;top:1px" width="34" height="34" viewBox="0 0 34 34"><path d="M10,3 a8,8 0 0 0 -6,11 a13,13 0 0 0 16,16 a8,8 0 0 0 10.500,-10.500 a13,13 0 0 0 -15.500,-15.500 a8,8 0 0 0 -5,-1z" fill="#1fb0ea"/><text x="17" y="25.500" font-family="Liberation Sans,sans-serif" font-size="24" font-weight="bold" fill="#fff" text-anchor="middle">S</text></svg><div class="t">Skype™ - nocni-e...</div></div>
<div class="tkb act" style="left:408px;width:158px"><svg style="left:8px;top:4px" width="32" height="32" viewBox="0 0 32 32"><path d="M19,1 L2,16 L19,31 L24,25 L13,16 L24,7Z" fill="#b8182a"/><path d="M19,1 L2,16 L9,16 L21.500,3.800Z" fill="#e0505e"/><circle cx="23.500" cy="16" r="4.500" fill="#c21c2c"/></svg><div class="t">Cubase 7 - [Samp...</div></div>
<div class="tkb" style="left:569px;width:160px"><svg style="left:8px;top:2px" width="33" height="33" viewBox="0 0 33 33"><defs><radialGradient id="ffg" cx="45%" cy="30%" r="65%"><stop offset="0" stop-color="#5fb4f4"/><stop offset="0.55" stop-color="#2a62c4"/><stop offset="1" stop-color="#1a2f80"/></radialGradient><linearGradient id="ffo" x1="0" y1="0" x2="1" y2="1"><stop offset="0" stop-color="#f08a1e"/><stop offset="0.6" stop-color="#e8601c"/><stop offset="1" stop-color="#d8401c"/></linearGradient></defs><circle cx="17.500" cy="14" r="11.500" fill="url(#ffg)"/><path d="M5,6 C0.500,13 0.500,24 9,29.500 C17,34 28,31 31,21.500 C32,17 31,12.500 28.500,9 C29.500,15 27.500,21 22.500,23.500 C17.500,25.500 12.500,23.500 11.500,19.500 C13.500,20.500 15.500,19.500 16.500,17.500 C13.500,17.500 11,15.500 11,12 C9.500,13 8,13 6,12 C6.500,10 6,8 5,6Z" fill="url(#ffo)"/><path d="M28.500,9 C31,12.500 32,17 31,21.500 C29,27.500 24,31 18,31.500 C25,28.500 28.500,22.500 28,15 C28.500,13 28.700,11 28.500,9Z" fill="#f9cc38"/><path d="M10,4 C7,5 5.500,7 5,9 C7,8 9,8 10.500,9 C10,7 10,5.500 10,4Z" fill="#f08a1e"/></svg><div class="t" style="letter-spacing:0">Recording &amp; Mixi...</div></div>
<div id="tray" style="left:1050px;top:0;width:229px;height:40px">
<div class="t" style="left:15px;top:12px;font-size:11px">DE</div>
<svg style="left:44px;top:12px" width="90" height="18" viewBox="0 0 90 18"><path d="M3,11 h8 l-4,-4.500z" fill="#fff"/><path d="M23.500,2 v14" stroke="#fff" stroke-width="1.500"/><path d="M25,3 h7 v2 h5 l-2,3 l2,3 h-7 v-2 h-5z" fill="#fff"/><rect x="50.500" y="3.500" width="9" height="7" fill="#2a5f8c" stroke="#fff" stroke-width="1.200"/><path d="M47.500,2 v11 h3 M53,14.500 h8 M57,11 v3" stroke="#fff" stroke-width="1.300" fill="none"/><path d="M73,7 h2.500 l3.500,-3.500 v11 l-3.500,-3.500 h-2.500z" fill="#fff"/><path d="M81,6 a4,4 0 0 1 0,6 M83,4 a6.500,6.500 0 0 1 0,10" fill="none" stroke="#d5e4f0" stroke-width="1"/></svg>
<div class="t" style="left:151px;top:7px;width:50px;text-align:center;font-size:12px;letter-spacing:-0.4px">12:58</div>
<div class="t" style="left:137px;top:24px;width:78px;text-align:center;font-size:12px;letter-spacing:-0.55px">15.11.2013</div>
<div style="left:215px;top:0;width:14px;height:40px;border-left:1px solid #1d4a6e;background:linear-gradient(90deg,rgba(255,255,255,.25),rgba(255,255,255,.05))"></div>
</div>
</div>

<div id="bl"></div><div id="br"></div><div id="bb"></div>
</div>
</body>
</html>
